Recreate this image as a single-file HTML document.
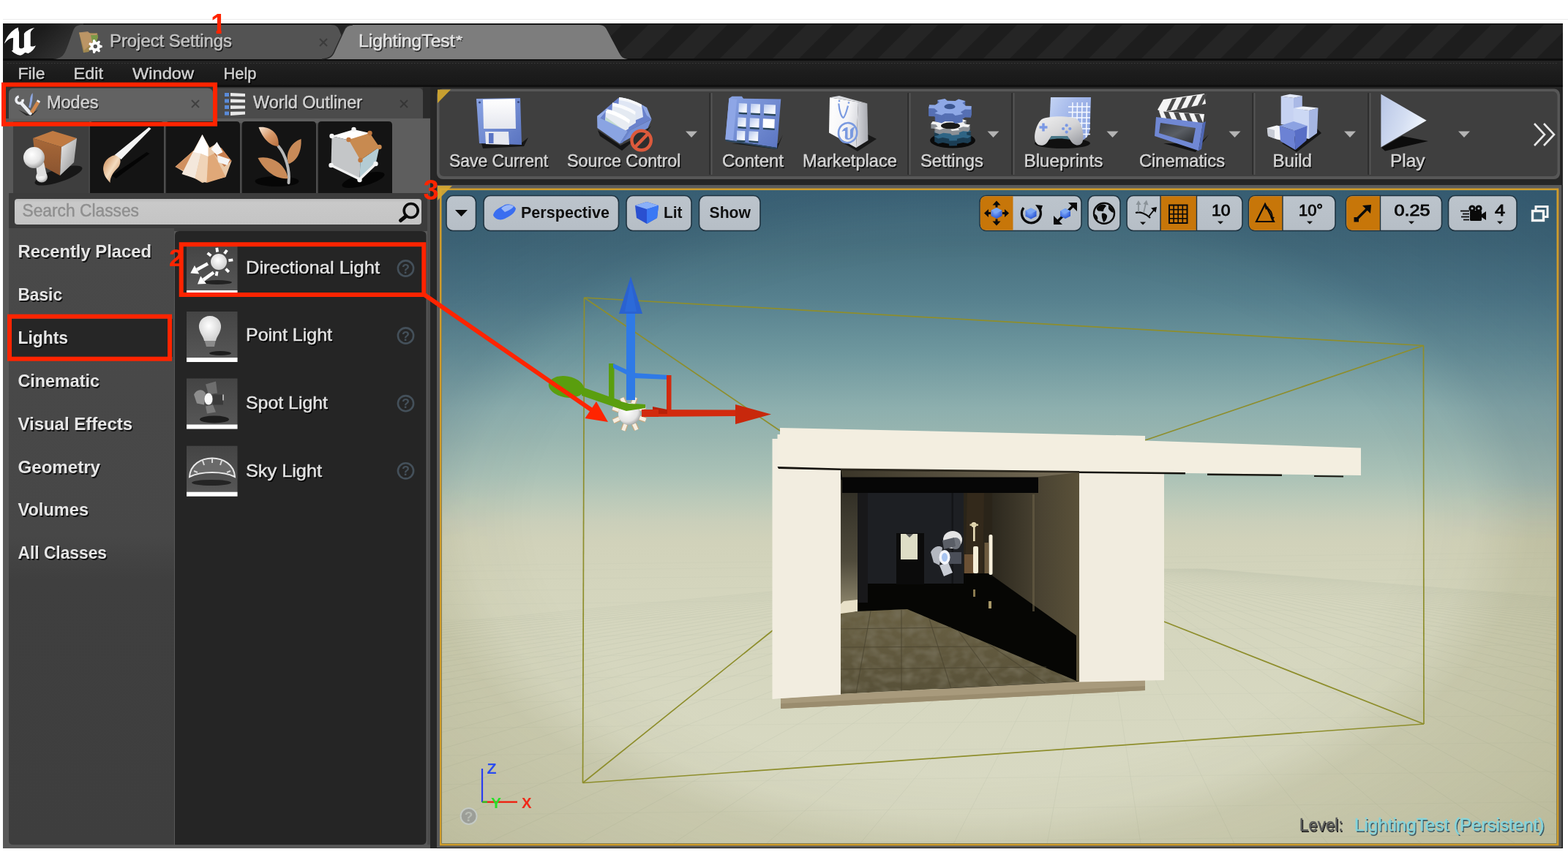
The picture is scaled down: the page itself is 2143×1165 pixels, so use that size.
<!DOCTYPE html>
<html lang="en"><head><meta charset="utf-8"><title>Unreal Editor - LightingTest</title>
<style>
html,body{margin:0;padding:0;background:#fff;width:2143px;height:1165px;overflow:hidden}
svg{display:block;will-change:transform;font-family:"Liberation Sans",sans-serif}
text{white-space:pre}
</style></head><body>
<svg width="2143" height="1165" viewBox="0 0 2143 1165">
<defs>
<pattern id="stripes" width="72" height="50" patternUnits="userSpaceOnUse" patternTransform="translate(10,32)">
  <rect width="72" height="50" fill="#252525"/>
  <polygon points="0,50 36,50 72,14 72,0 50,0" fill="#1d1d1d"/>
  <polygon points="0,14 0,0 14,0" fill="#1d1d1d"/>
</pattern>
<linearGradient id="tlg" x1="0" y1="0" x2="1" y2="0.5"><stop offset="0" stop-color="#151515"/><stop offset="0.45" stop-color="#1c1c1c"/><stop offset="1" stop-color="#343434"/></linearGradient>
<linearGradient id="menug" x1="0" y1="0" x2="0" y2="1">
  <stop offset="0" stop-color="#232323"/><stop offset="0.5" stop-color="#1c1c1c"/><stop offset="1" stop-color="#181818"/>
</linearGradient>
<linearGradient id="catg" gradientUnits="userSpaceOnUse" x1="0" y1="312" x2="0" y2="1155"><stop offset="0" stop-color="#494949"/><stop offset="0.5" stop-color="#474747"/><stop offset="0.57" stop-color="#3f3f3f"/><stop offset="1" stop-color="#3e3e3e"/></linearGradient>
<linearGradient id="thumbg" x1="0" y1="0" x2="0" y2="1">
  <stop offset="0" stop-color="#444"/><stop offset="1" stop-color="#585858"/>
</linearGradient>
<linearGradient id="searchg" x1="0" y1="0" x2="0" y2="1">
  <stop offset="0" stop-color="#bdbdbd"/><stop offset="0.15" stop-color="#c9c9c9"/><stop offset="1" stop-color="#c4c4c4"/>
</linearGradient>

<linearGradient id="blueg" x1="0" y1="0" x2="1" y2="1"><stop offset="0" stop-color="#8aa4e4"/><stop offset="1" stop-color="#5a74c0"/></linearGradient>
<linearGradient id="blueg2" x1="0" y1="0" x2="0" y2="1"><stop offset="0" stop-color="#92aae8"/><stop offset="1" stop-color="#6078c4"/></linearGradient>
<linearGradient id="whiteg" x1="0" y1="0" x2="0" y2="1"><stop offset="0" stop-color="#ffffff"/><stop offset="1" stop-color="#e4e6ee"/></linearGradient>
<linearGradient id="whiteg2" x1="0" y1="0" x2="1" y2="0"><stop offset="0" stop-color="#ffffff"/><stop offset="1" stop-color="#b8bcc8"/></linearGradient>
<linearGradient id="cellg" x1="0" y1="0" x2="1" y2="1"><stop offset="0" stop-color="#b4c6ee"/><stop offset="0.6" stop-color="#e8eefa"/><stop offset="1" stop-color="#ffffff"/></linearGradient>
<linearGradient id="bagg" x1="0" y1="0" x2="1" y2="0.3"><stop offset="0" stop-color="#ffffff"/><stop offset="0.7" stop-color="#f4f4f6"/><stop offset="1" stop-color="#dcdde2"/></linearGradient>
<linearGradient id="bagsg" x1="0" y1="0" x2="1" y2="0"><stop offset="0" stop-color="#d8d9de"/><stop offset="1" stop-color="#a8aab0"/></linearGradient>
<linearGradient id="pageg" x1="0" y1="0" x2="1" y2="0.6"><stop offset="0" stop-color="#c4d4f4"/><stop offset="0.5" stop-color="#a4b8ea"/><stop offset="1" stop-color="#90a8e2"/></linearGradient>
<linearGradient id="padg" x1="0" y1="0" x2="0.9" y2="1"><stop offset="0" stop-color="#f2f2f2"/><stop offset="0.55" stop-color="#d4d4d6"/><stop offset="1" stop-color="#9a9ca2"/></linearGradient>
<linearGradient id="playg" x1="0" y1="0" x2="1" y2="0.4"><stop offset="0" stop-color="#b8c6e6"/><stop offset="0.6" stop-color="#d4def2"/><stop offset="1" stop-color="#eef4fc"/></linearGradient>
<linearGradient id="bldg" x1="0" y1="0" x2="1" y2="0"><stop offset="0" stop-color="#a8b8e0"/><stop offset="0.5" stop-color="#dce4f6"/><stop offset="1" stop-color="#b4c2e6"/></linearGradient>
<linearGradient id="clapg" x1="0" y1="0" x2="1" y2="1"><stop offset="0" stop-color="#3a3e44"/><stop offset="0.5" stop-color="#5a5e64"/><stop offset="1" stop-color="#2a2c30"/></linearGradient>

<linearGradient id="sky" gradientUnits="userSpaceOnUse" x1="0" y1="258" x2="0" y2="1156">
  <stop offset="0" stop-color="#40687b"/>
  <stop offset="0.0835" stop-color="#48707f"/>
  <stop offset="0.161" stop-color="#557f8d"/>
  <stop offset="0.25" stop-color="#6e979e"/>
  <stop offset="0.334" stop-color="#8dafae"/>
  <stop offset="0.381" stop-color="#99b6b0"/>
  <stop offset="0.433" stop-color="#a9c1b6"/>
  <stop offset="0.475" stop-color="#bccab9"/>
  <stop offset="0.507" stop-color="#cacfba"/>
  <stop offset="0.538" stop-color="#d1d2ba"/>
  <stop offset="0.611" stop-color="#d4d5bd"/>
  <stop offset="0.826" stop-color="#d7d8c1"/>
  <stop offset="1" stop-color="#d9dac4"/>
</linearGradient>
<radialGradient id="vigS" gradientUnits="userSpaceOnUse" cx="0" cy="0" r="1" gradientTransform="translate(1325,707) scale(1080,640)">
  <stop offset="0.55" stop-color="#052043" stop-opacity="0"/>
  <stop offset="0.636" stop-color="#052043" stop-opacity="0.03"/>
  <stop offset="0.707" stop-color="#052043" stop-opacity="0.12"/>
  <stop offset="0.9" stop-color="#052043" stop-opacity="0.18"/>
  <stop offset="1" stop-color="#052043" stop-opacity="0.22"/>
</radialGradient>
<radialGradient id="vigG" gradientUnits="userSpaceOnUse" cx="0" cy="0" r="1" gradientTransform="translate(1325,707) scale(1080,640)">
  <stop offset="0.55" stop-color="#524d0d" stop-opacity="0"/>
  <stop offset="0.636" stop-color="#524d0d" stop-opacity="0.03"/>
  <stop offset="0.707" stop-color="#524d0d" stop-opacity="0.12"/>
  <stop offset="0.9" stop-color="#524d0d" stop-opacity="0.18"/>
  <stop offset="1" stop-color="#524d0d" stop-opacity="0.22"/>
</radialGradient>
<linearGradient id="mskS" gradientUnits="userSpaceOnUse" x1="0" y1="660" x2="0" y2="740"><stop offset="0" stop-color="#fff"/><stop offset="1" stop-color="#000"/></linearGradient>
<linearGradient id="mskG" gradientUnits="userSpaceOnUse" x1="0" y1="660" x2="0" y2="740"><stop offset="0" stop-color="#000"/><stop offset="1" stop-color="#fff"/></linearGradient>
<mask id="maskS" maskUnits="userSpaceOnUse" x="604" y="261" width="1523" height="892"><rect x="604" y="261" width="1523" height="892" fill="url(#mskS)"/></mask>
<mask id="maskG" maskUnits="userSpaceOnUse" x="604" y="261" width="1523" height="892"><rect x="604" y="261" width="1523" height="892" fill="url(#mskG)"/></mask>
<filter id="mottle" x="0" y="0" width="1" height="1"><feTurbulence type="fractalNoise" baseFrequency="0.06 0.09" numOctaves="2" seed="7" result="n"/><feColorMatrix in="n" type="matrix" values="0 0 0 0 0.18  0 0 0 0 0.16  0 0 0 0 0.10  0 0 0 -1.6 1.0" result="d"/><feComposite in="d" in2="SourceGraphic" operator="in"/></filter>
<clipPath id="vpclip"><rect x="604" y="261" width="1523" height="892"/></clipPath>
<linearGradient id="floorg" x1="0" y1="0" x2="0" y2="1"><stop offset="0" stop-color="#6a6144"/><stop offset="1" stop-color="#575038"/></linearGradient>
<linearGradient id="rwallg" x1="0" y1="0" x2="1" y2="0"><stop offset="0" stop-color="#2c281e"/><stop offset="0.55" stop-color="#4a4332"/><stop offset="1" stop-color="#5a5139"/></linearGradient>
<linearGradient id="lwallg" x1="0" y1="0" x2="0" y2="1"><stop offset="0" stop-color="#2c2a22"/><stop offset="0.6" stop-color="#504b3c"/><stop offset="1" stop-color="#9a9276"/></linearGradient>
<linearGradient id="ceilg" x1="0" y1="0" x2="1" y2="0"><stop offset="0" stop-color="#3a3528"/><stop offset="1" stop-color="#7a705a"/></linearGradient>
<radialGradient id="bulb" cx="0.4" cy="0.35" r="0.7"><stop offset="0" stop-color="#fff"/><stop offset="0.7" stop-color="#e4e4e4"/><stop offset="1" stop-color="#a0a0a0"/></radialGradient>
<linearGradient id="btn" x1="0" y1="0" x2="0" y2="1"><stop offset="0" stop-color="#bcc4cc"/><stop offset="1" stop-color="#b6bec6"/></linearGradient>
<radialGradient id="cubeb" cx="0.4" cy="0.35" r="0.7"><stop offset="0" stop-color="#8ab4ff"/><stop offset="1" stop-color="#2450d0"/></radialGradient>
</defs>
<rect x="4" y="26" width="2139" height="1" fill="#ececec" />
<rect x="4" y="32" width="2132" height="1128" fill="#262626" />
<rect x="4" y="32" width="2132" height="50" fill="url(#stripes)" />
<rect x="4" y="32" width="2132" height="2" fill="#161616" />
<rect x="4" y="32" width="110" height="50" fill="url(#tlg)" />
<rect x="4" y="80" width="2132" height="3" fill="#0e0e0e" />
<path d="M72,81 C86,80 88,74 92,64 L100,42 C102,36 106,34 112,34 L452,34 C460,34 462,37 464,42 L468,52 L452,81 Z" fill="#535353" />
<path d="M440,81 C452,80 455,76 458,68 L470,42 C472,36 476,34 482,34 L818,34 C826,34 828,38 830,42 L846,72 C849,78 852,80 858,81 Z" fill="#7d7d7d" />
<path d="M440,81 C452,80 455,76 458,68 L470,42 C472,36 476,34 482,34" fill="none" stroke="#2a2a2a" stroke-width="1.5" />
<path d="M6,59.7 C8,52 14,44 21,39.3 L25,37.6 C24.5,40 25.5,42 26,44 L26,64 C26,67 31,67 32.9,64.5 L32.9,46 C36,42 42,39 47.3,38.1 C44,40.5 42,42.5 41.7,45 L41.7,63 C44,64 47,63.5 49.1,62 C47,67 43,71 38.5,73.1 L34.3,71.7 C32,74 30,75.2 27.8,75.7 C23,75 19,72.5 15.8,69.4 L17.6,68.5 L18.1,51.8 C14,52 10,54.5 6,59.7 Z" fill="#ffffff" />
<path d="M108,44.5 L133,45.5 L134,52 L121,71 L114,72 Z" fill="#a08850" />
<path d="M108,44.5 L120,43 L124,46.5 L133,45.5 L126,58 L115,69 Z" fill="#c09868" opacity="0.85"/>
<path d="M124,48 L134,48 L132,57 L126,57 Z" fill="#7a9a48" />
<path d="M139.7,62.3 L139.7,64.7 L136.4,65.7 L135.8,66.9 L137.1,70.1 L135.2,71.6 L132.4,69.6 L131.1,69.9 L129.4,73.0 L127.0,72.4 L126.8,68.9 L125.8,68.1 L122.3,68.7 L121.3,66.5 L123.9,64.1 L123.9,62.9 L121.3,60.5 L122.3,58.3 L125.8,58.9 L126.8,58.1 L127.0,54.6 L129.4,54.0 L131.1,57.1 L132.4,57.4 L135.2,55.4 L137.1,56.9 L135.8,60.1 L136.4,61.3 Z" fill="#ffffff" />
<circle cx="130.3" cy="63.5" r="2.7" fill="#535353"/>
<text x="151.5" y="66" font-size="23.5" textLength="167" lengthAdjust="spacingAndGlyphs" fill="#1a1a1a" >Project Settings</text><text x="150" y="64" font-size="23.5" textLength="167" lengthAdjust="spacingAndGlyphs" fill="#c4c4c4"  stroke="#c4c4c4" stroke-width="0.45">Project Settings</text>
<line x1="437" y1="53" x2="447" y2="63" stroke="#3c3c3c" stroke-width="2" />
<line x1="437" y1="63" x2="447" y2="53" stroke="#3c3c3c" stroke-width="2" />
<text x="491.5" y="66" font-size="23.5" textLength="131.5" lengthAdjust="spacingAndGlyphs" fill="#2a2a2a" >LightingTest</text><text x="490" y="64" font-size="23.5" textLength="131.5" lengthAdjust="spacingAndGlyphs" fill="#e4e4e4"  stroke="#e4e4e4" stroke-width="0.45">LightingTest</text>
<text x="624.5" y="62.5" font-size="16" textLength="9" lengthAdjust="spacingAndGlyphs" fill="#2a2a2a" >*</text><text x="623" y="61" font-size="16" textLength="9" lengthAdjust="spacingAndGlyphs" fill="#e4e4e4"  stroke="#e4e4e4" stroke-width="0.45">*</text>
<rect x="4" y="83" width="2132" height="35" fill="url(#menug)" />
<line x1="10" y1="86.5" x2="2130" y2="86.5" stroke="#3a3a3a" stroke-width="1" stroke-dasharray="1.5,2.5"/>
<rect x="4" y="116" width="2132" height="3" fill="#101010" />
<text x="26.0" y="110" font-size="22.5" textLength="37" lengthAdjust="spacingAndGlyphs" fill="#000" >File</text><text x="24.5" y="108" font-size="22.5" textLength="37" lengthAdjust="spacingAndGlyphs" fill="#cfcfcf"  stroke="#cfcfcf" stroke-width="0.45">File</text>
<text x="102.0" y="110" font-size="22.5" textLength="40.5" lengthAdjust="spacingAndGlyphs" fill="#000" >Edit</text><text x="100.5" y="108" font-size="22.5" textLength="40.5" lengthAdjust="spacingAndGlyphs" fill="#cfcfcf"  stroke="#cfcfcf" stroke-width="0.45">Edit</text>
<text x="182.5" y="110" font-size="22.5" textLength="84" lengthAdjust="spacingAndGlyphs" fill="#000" >Window</text><text x="181" y="108" font-size="22.5" textLength="84" lengthAdjust="spacingAndGlyphs" fill="#cfcfcf"  stroke="#cfcfcf" stroke-width="0.45">Window</text>
<text x="307.0" y="110" font-size="22.5" textLength="45" lengthAdjust="spacingAndGlyphs" fill="#000" >Help</text><text x="305.5" y="108" font-size="22.5" textLength="45" lengthAdjust="spacingAndGlyphs" fill="#cfcfcf"  stroke="#cfcfcf" stroke-width="0.45">Help</text>
<rect x="4" y="119" width="584" height="1041" fill="#585858" />
<rect x="4" y="1155" width="584" height="5" fill="#585858" />
<rect x="4" y="119" width="584" height="47" fill="#333333" />
<rect x="578" y="119" width="10" height="42" fill="#2a2a2a" />
<path d="M291,166 L291,126 Q291,120.5 297,120.5 L572,120.5 Q578,120.5 578,126 L578,162 L291,162 Z" fill="#4b4b4b" />
<path d="M12,166 L12,128 Q12,120.5 20,120.5 L284,120.5 Q291,120.5 291,128 L291,166 Z" fill="#626262" />
<path d="M25,150 L40,157 L52,150 L44,158 L36,158 Z" fill="#2a2a2a" />
<line x1="29.5" y1="141.5" x2="41.5" y2="155" stroke="#eceef2" stroke-width="4.6" stroke-linecap="round"/>
<circle cx="26.6" cy="136.6" r="4.6" fill="none" stroke="#eceef2" stroke-width="3.6" stroke-dasharray="21 8" transform="rotate(-10 26.6 136.6)"/>
<path d="M44.5,127 C42,130 41,134 41,138 L39.2,147 L41.8,147.5 L44,138 C44.5,134 45,130 44.5,127 Z" fill="#8ea8e2" />
<path d="M50,138.5 L54,141 L45.5,155 L41,153 Z" fill="#d0884e" />
<path d="M51.2,136.2 L55,138.6 L54,141 L50,138.5 Z" fill="#f4f4f4" />
<text x="65.5" y="149.5" font-size="23.5" textLength="70.5" lengthAdjust="spacingAndGlyphs" fill="#222" >Modes</text><text x="64" y="147.5" font-size="23.5" textLength="70.5" lengthAdjust="spacingAndGlyphs" fill="#d2d2d2"  stroke="#d2d2d2" stroke-width="0.45">Modes</text>
<line x1="262" y1="137" x2="272" y2="147" stroke="#404040" stroke-width="2" />
<line x1="262" y1="147" x2="272" y2="137" stroke="#404040" stroke-width="2" />
<path d="M315,127.0 L335,128.0 L335,132.0 L315,131.5 Z" fill="#e8e8e8" />
<rect x="307" y="127.0" width="6" height="5" fill="#5a8ad8" />
<path d="M315,135.6 L335,136.2 L335,140.2 L315,140.3 Z" fill="#e8e8e8" />
<rect x="307" y="135.5" width="6" height="5" fill="#5a8ad8" />
<path d="M315,144.2 L335,144.4 L335,148.4 L315,149.1 Z" fill="#e8e8e8" />
<rect x="307" y="144.0" width="6" height="5" fill="#5a8ad8" />
<path d="M315,152.8 L335,152.6 L335,156.6 L315,157.9 Z" fill="#e8e8e8" />
<rect x="307" y="152.5" width="6" height="5" fill="#5a8ad8" />
<text x="347.5" y="149.5" font-size="23.5" textLength="149" lengthAdjust="spacingAndGlyphs" fill="#1a1a1a" >World Outliner</text><text x="346" y="147.5" font-size="23.5" textLength="149" lengthAdjust="spacingAndGlyphs" fill="#d2d2d2"  stroke="#d2d2d2" stroke-width="0.45">World Outliner</text>
<line x1="547" y1="137" x2="557" y2="147" stroke="#363636" stroke-width="2" />
<line x1="547" y1="147" x2="557" y2="137" stroke="#363636" stroke-width="2" />
<rect x="11" y="162" width="577" height="12" fill="#5e5e5e" />
<rect x="4" y="162" width="8" height="993" fill="#585858" />
<rect x="536" y="166" width="52" height="98" fill="#5e5e5e" />
<rect x="18" y="166" width="104" height="98" fill="#3e3e3e" />
<path d="M122.5,264 L122.5,171 Q122.5,166 127.5,166 L219,166 Q224,166 224,171 L224,264 Z" fill="#141414" />
<path d="M226.5,264 L226.5,171 Q226.5,166 231.5,166 L323,166 Q328,166 328,171 L328,264 Z" fill="#141414" />
<path d="M330.5,264 L330.5,171 Q330.5,166 335.5,166 L427,166 Q432,166 432,171 L432,264 Z" fill="#141414" />
<path d="M434.5,264 L434.5,171 Q434.5,166 439.5,166 L531,166 Q536,166 536,171 L536,264 Z" fill="#141414" />
<rect x="121.2" y="168" width="1.6" height="96" fill="#4a4a4a" />
<rect x="224.5" y="168" width="1.6" height="96" fill="#4a4a4a" />
<rect x="328.4" y="168" width="1.6" height="96" fill="#4a4a4a" />
<rect x="432.4" y="168" width="1.6" height="96" fill="#4a4a4a" />
<defs><radialGradient id="sphg" cx="0.4" cy="0.35" r="0.7"><stop offset="0" stop-color="#fff"/><stop offset="0.6" stop-color="#e4e4e4"/><stop offset="1" stop-color="#9a9a9a"/></radialGradient><linearGradient id="cubr" x1="0" y1="0" x2="1" y2="1"><stop offset="0" stop-color="#f0f0f0"/><stop offset="1" stop-color="#8a8a8a"/></linearGradient><linearGradient id="cubf" x1="0" y1="0" x2="0" y2="1"><stop offset="0" stop-color="#a86838"/><stop offset="1" stop-color="#8a5430"/></linearGradient></defs>
<ellipse cx="80" cy="240" rx="34" ry="9" fill="#111" opacity="0.85" transform="rotate(-18 80 240)"/>
<path d="M45,189 L72,179 L105,189 L84,201 Z" fill="#c07a42" />
<path d="M45,189 L84,201 L82,240 L60,228 L47,206 Z" fill="url(#cubf)" />
<path d="M84,201 L105,189 L101,222 L82,240 Z" fill="url(#cubr)" />
<ellipse cx="57" cy="242" rx="8" ry="7.5" fill="url(#sphg)"/>
<path d="M49,224 L51,242 L64,240 L60,222 Z" fill="#e0e0e0" />
<circle cx="46.5" cy="215.5" r="14.5" fill="url(#sphg)"/>
<defs><linearGradient id="brs" x1="0" y1="0" x2="1" y2="1"><stop offset="0" stop-color="#c8824a"/><stop offset="0.5" stop-color="#f4dcc0"/><stop offset="1" stop-color="#b87038"/></linearGradient></defs>
<path d="M152.5,240 L200.5,208 L204.5,210 L158.5,244 Z" fill="#050505" />
<path d="M203.5,174 L206.5,176 L165.5,218 L156.5,212 Z" fill="#f4f4f4" />
<path d="M157.5,212 C146.5,214 139.5,224 141.5,234 C142.5,242 147.5,246 150.5,250 C150.5,242 154.5,236 160.5,230 C164.5,226 165.5,220 163.5,216 Z" fill="url(#brs)" />
<path d="M239.5,228 L264.5,206 L276.5,184 L286.5,202 L296.5,196 L316.5,220 L308.5,242 L276.5,250 L266.5,244 Z" fill="#e8c8a8" />
<path d="M239.5,228 L264.5,206 L256.5,236 Z" fill="#d09060" />
<path d="M264.5,206 L274.5,210 L266.5,244 L248.5,238 Z" fill="#f4e8dc" />
<path d="M274.5,210 L284.5,214 L282.5,250 L266.5,244 Z" fill="#f0d4b8" />
<path d="M284.5,214 L292.5,210 L308.5,242 L282.5,250 Z" fill="#e0a878" />
<path d="M292.5,210 L302.5,202 L316.5,220 L306.5,228 Z" fill="#c88050" />
<path d="M264.5,208 L276.5,184 L284.5,200 L284.5,214 L274.5,210 Z" fill="#ffffff" />
<path d="M288.5,204 L296.5,194 L304.5,208 L296.5,212 Z" fill="#f8f8f8" />
<path d="M296.5,212 L314.5,218 L310.5,226 L298.5,222 Z" fill="#f4f4f4" />
<defs><linearGradient id="lfg" x1="0" y1="0" x2="1" y2="1"><stop offset="0" stop-color="#f8e8d8"/><stop offset="0.5" stop-color="#d89868"/><stop offset="1" stop-color="#b87040"/></linearGradient></defs>
<ellipse cx="378.5" cy="248" rx="30" ry="7" fill="#060606"/>
<path d="M380.5,200 C390.5,212 396.5,232 394.5,250" fill="none" stroke="#b8b8b8" stroke-width="4" stroke-linecap="round"/>
<path d="M380.5,200 C368.5,200 358.5,188 353.5,174 C368.5,172 382.5,182 380.5,200 Z" fill="url(#lfg)" />
<path d="M394.5,224 C388.5,210 398.5,194 411.5,190 C412.5,206 406.5,220 394.5,224 Z" fill="#c88a58" />
<path d="M393.5,244 C376.5,246 360.5,232 352.5,216 C370.5,212 390.5,224 393.5,244 Z" fill="#c88a58" />
<ellipse cx="496.5" cy="246" rx="30" ry="8" fill="#050505" transform="rotate(-15 496.5 246)"/>
<path d="M453.5,186 L483.5,177 L505.5,182 L482.5,193 Z" fill="#ffffff" />
<path d="M453.5,186 L482.5,193 L492.5,219 L491.5,245 L452.5,226 Z" fill="#c4c6c8" />
<path d="M492.5,219 L518.5,201 L513.5,224 L491.5,245 Z" fill="#b4ccd4" />
<path d="M476.5,191 L505.5,182 L518.5,201 L492.5,219 Z" fill="#c88a50" />
<circle cx="476.5" cy="191" r="3.2" fill="#c07840"/>
<circle cx="505.5" cy="182" r="3.2" fill="#c07840"/>
<circle cx="518.5" cy="201" r="3.2" fill="#c88a50"/>
<circle cx="492.5" cy="219" r="3.2" fill="#c07840"/>
<path d="M452.5,226 L491.5,245 L513.5,224" fill="none" stroke="#f0f0f0" stroke-width="3.5" stroke-linejoin="round"/>
<circle cx="453.5" cy="186" r="3.2" fill="#f4f4f4"/>
<circle cx="483.5" cy="177" r="3.2" fill="#f4f4f4"/>
<circle cx="452.5" cy="226" r="3.2" fill="#f4f4f4"/>
<circle cx="491.5" cy="246" r="3.2" fill="#f4f4f4"/>
<circle cx="513.5" cy="224" r="3.2" fill="#f4f4f4"/>
<rect x="12" y="264" width="572" height="52" fill="#3c3c3c" />
<rect x="584" y="264" width="4" height="891" fill="#4c4c4c" />
<rect x="20" y="272" width="556" height="35" rx="4" fill="url(#searchg)" />
<text x="30.5" y="296" font-size="23.5" textLength="159.5" lengthAdjust="spacingAndGlyphs" fill="#8f8f8f"  stroke="#8f8f8f" stroke-width="0.45">Search Classes</text>
<circle cx="561.7" cy="288" r="9.5" fill="none" stroke="#0a0a0a" stroke-width="3.6"/>
<line x1="555" y1="295.5" x2="547.5" y2="301.5" stroke="#0a0a0a" stroke-width="5" stroke-linecap="round"/>
<rect x="12" y="312" width="226" height="843" fill="url(#catg)" />
<path d="M12,1155 L12,1149 Q12,1155 18,1155 Z" fill="#585858" />
<path d="M239,1155 L239,322 Q239,316 245,316 L576,316 Q582.5,316 582.5,322 L582.5,1149 Q582.5,1155 576,1155 Z" fill="#252525" />
<rect x="14" y="436" width="222" height="52" fill="#262626" />
<text x="26.0" y="354.0" font-size="23.5" font-weight="bold" textLength="182.5" lengthAdjust="spacingAndGlyphs" fill="#111" >Recently Placed</text><text x="24.5" y="352.0" font-size="23.5" font-weight="bold" textLength="182.5" lengthAdjust="spacingAndGlyphs" fill="#e6e6e6" >Recently Placed</text>
<text x="26.0" y="412.9" font-size="23.5" font-weight="bold" textLength="60.5" lengthAdjust="spacingAndGlyphs" fill="#111" >Basic</text><text x="24.5" y="410.9" font-size="23.5" font-weight="bold" textLength="60.5" lengthAdjust="spacingAndGlyphs" fill="#e6e6e6" >Basic</text>
<text x="26.0" y="471.8" font-size="23.5" font-weight="bold" textLength="68.5" lengthAdjust="spacingAndGlyphs" fill="#111" >Lights</text><text x="24.5" y="469.8" font-size="23.5" font-weight="bold" textLength="68.5" lengthAdjust="spacingAndGlyphs" fill="#e6e6e6" >Lights</text>
<text x="26.0" y="530.7" font-size="23.5" font-weight="bold" textLength="111.5" lengthAdjust="spacingAndGlyphs" fill="#111" >Cinematic</text><text x="24.5" y="528.7" font-size="23.5" font-weight="bold" textLength="111.5" lengthAdjust="spacingAndGlyphs" fill="#e6e6e6" >Cinematic</text>
<text x="26.0" y="589.6" font-size="23.5" font-weight="bold" textLength="156.5" lengthAdjust="spacingAndGlyphs" fill="#111" >Visual Effects</text><text x="24.5" y="587.6" font-size="23.5" font-weight="bold" textLength="156.5" lengthAdjust="spacingAndGlyphs" fill="#e6e6e6" >Visual Effects</text>
<text x="26.0" y="648.5" font-size="23.5" font-weight="bold" textLength="112.5" lengthAdjust="spacingAndGlyphs" fill="#111" >Geometry</text><text x="24.5" y="646.5" font-size="23.5" font-weight="bold" textLength="112.5" lengthAdjust="spacingAndGlyphs" fill="#e6e6e6" >Geometry</text>
<text x="26.0" y="707.4" font-size="23.5" font-weight="bold" textLength="96.5" lengthAdjust="spacingAndGlyphs" fill="#111" >Volumes</text><text x="24.5" y="705.4" font-size="23.5" font-weight="bold" textLength="96.5" lengthAdjust="spacingAndGlyphs" fill="#e6e6e6" >Volumes</text>
<text x="26.0" y="766.3" font-size="23.5" font-weight="bold" textLength="121.5" lengthAdjust="spacingAndGlyphs" fill="#111" >All Classes</text><text x="24.5" y="764.3" font-size="23.5" font-weight="bold" textLength="121.5" lengthAdjust="spacingAndGlyphs" fill="#e6e6e6" >All Classes</text>
<rect x="255" y="334" width="69.5" height="69" fill="url(#thumbg)" />
<rect x="255" y="397" width="69.5" height="6" fill="#ffffff" />
<text x="337.5" y="376" font-size="24" textLength="183" lengthAdjust="spacingAndGlyphs" fill="#000" >Directional Light</text><text x="336" y="374" font-size="24" textLength="183" lengthAdjust="spacingAndGlyphs" fill="#e2e2e2"  stroke="#e2e2e2" stroke-width="0.45">Directional Light</text>
<circle cx="554.5" cy="367" r="10.6" fill="none" stroke="#44505a" stroke-width="2.6"/>
<text x="554.5" y="373.5" font-size="18" font-weight="bold" text-anchor="middle" fill="#44505a" >?</text>
<rect x="255" y="426" width="69.5" height="69" fill="url(#thumbg)" />
<rect x="255" y="489" width="69.5" height="6" fill="#ffffff" />
<text x="337.5" y="468" font-size="24" textLength="118" lengthAdjust="spacingAndGlyphs" fill="#000" >Point Light</text><text x="336" y="466" font-size="24" textLength="118" lengthAdjust="spacingAndGlyphs" fill="#e2e2e2"  stroke="#e2e2e2" stroke-width="0.45">Point Light</text>
<circle cx="554.5" cy="459" r="10.6" fill="none" stroke="#44505a" stroke-width="2.6"/>
<text x="554.5" y="465.5" font-size="18" font-weight="bold" text-anchor="middle" fill="#44505a" >?</text>
<rect x="255" y="517.5" width="69.5" height="69" fill="url(#thumbg)" />
<rect x="255" y="580.5" width="69.5" height="6" fill="#ffffff" />
<text x="337.5" y="560.5" font-size="24" textLength="112" lengthAdjust="spacingAndGlyphs" fill="#000" >Spot Light</text><text x="336" y="558.5" font-size="24" textLength="112" lengthAdjust="spacingAndGlyphs" fill="#e2e2e2"  stroke="#e2e2e2" stroke-width="0.45">Spot Light</text>
<circle cx="554.5" cy="551.7" r="10.6" fill="none" stroke="#44505a" stroke-width="2.6"/>
<text x="554.5" y="558.2" font-size="18" font-weight="bold" text-anchor="middle" fill="#44505a" >?</text>
<rect x="255" y="609.7" width="69.5" height="69" fill="url(#thumbg)" />
<rect x="255" y="672.7" width="69.5" height="6" fill="#ffffff" />
<text x="337.5" y="653.7" font-size="24" textLength="104" lengthAdjust="spacingAndGlyphs" fill="#000" >Sky Light</text><text x="336" y="651.7" font-size="24" textLength="104" lengthAdjust="spacingAndGlyphs" fill="#e2e2e2"  stroke="#e2e2e2" stroke-width="0.45">Sky Light</text>
<circle cx="554.5" cy="643.8" r="10.6" fill="none" stroke="#44505a" stroke-width="2.6"/>
<text x="554.5" y="650.3" font-size="18" font-weight="bold" text-anchor="middle" fill="#44505a" >?</text>
<defs><radialGradient id="sung" cx="0.45" cy="0.4" r="0.6"><stop offset="0" stop-color="#fff"/><stop offset="1" stop-color="#d0d0d0"/></radialGradient></defs>
<line x1="296.65574960149644" y1="371.29490466566483" x2="295.61386053549484" y2="377.20375118373806" stroke="#fff" stroke-width="3.8" />
<line x1="308.5459415460184" y1="367.5459415460184" x2="312.7885822331377" y2="371.7885822331377" stroke="#fff" stroke-width="3.8" />
<line x1="312.3686189280112" y1="356.1211631370391" x2="318.31022734046064" y2="355.28612453127874" stroke="#fff" stroke-width="3.8" />
<line x1="306.7432818907391" y1="346.9414474020986" x2="310.1847405088454" y2="342.02653513636466" stroke="#fff" stroke-width="3.8" />
<line x1="297.1211631370391" y1="344.6313810719888" x2="296.28612453127874" y2="338.68977265953936" stroke="#fff" stroke-width="3.8" />
<line x1="288.36185482630924" y1="349.6885700831036" x2="283.63379030466893" y2="345.99460123114966" stroke="#fff" stroke-width="3.8" />
<circle cx="299" cy="358" r="11" fill="url(#sung)"/>
<ellipse cx="297" cy="386" rx="20" ry="3" fill="#222"/>
<line x1="284" y1="360.5" x2="269.06762091785123" y2="368.6907564585626" stroke="#fff" stroke-width="4.6" />
<path d="M260.3,373.5 L265.94161261591694,362.9918028619593 L272.1936292197855,374.3897100551659 Z" fill="#fff" />
<line x1="292" y1="372.5" x2="278.0698768745428" y2="382.6943173781755" stroke="#fff" stroke-width="4.6" />
<path d="M270,388.6 L274.23118317035687,377.44889740972275 L281.9085705787287,387.9397373466283 Z" fill="#fff" />
<ellipse cx="301" cy="483" rx="15" ry="3" fill="#1e1e1e"/>
<path d="M279,464 L295,464 L293,474 L282,474 Z" fill="#8a8a8a" />
<path d="M287,432 C297,432 303,440 302,448 C301,456 296,460 295,466 L279,466 C278,460 273,456 272,448 C271,440 277,432 287,432 Z" fill="url(#sung)" />
<ellipse cx="293" cy="573.5" rx="20" ry="5" fill="#1e1e1e"/>
<path d="M281,525.5 L295,521.5 L297,537.5 L285,539.5 Z" fill="#6e6e6e" />
<path d="M265,539.5 C269,531.5 277,531.5 281,537.5 L279,553.5 L269,551.5 Z" fill="#8e8e8e" />
<path d="M291,539.5 L305,539.5 L305,553.5 L291,553.5 Z" fill="#3a3a3a" />
<line x1="305" y1="539.5" x2="305" y2="547.5" stroke="#d0d0d0" stroke-width="1.5" />
<path d="M281,555.5 L291,553.5 L295,563.5 L283,565.5 Z" fill="#7a7a7a" />
<ellipse cx="285" cy="545.5" rx="5.5" ry="8" fill="#fafafa"/>
<ellipse cx="289" cy="660" rx="27" ry="4" fill="#242424"/>
<path d="M259,652 C261,618 319,618 321,652 C305,644 275,644 259,652 Z" fill="#6a6a6a" stroke="#e8e8e8" stroke-width="2" />
<line x1="277" y1="630" x2="279" y2="636" stroke="#d8d8d8" stroke-width="2" />
<line x1="290" y1="627" x2="290" y2="633" stroke="#d8d8d8" stroke-width="2" />
<line x1="303" y1="630" x2="301" y2="636" stroke="#d8d8d8" stroke-width="2" />
<line x1="265" y1="644" x2="270" y2="646" stroke="#d8d8d8" stroke-width="2" />
<line x1="315" y1="644" x2="310" y2="646" stroke="#d8d8d8" stroke-width="2" />
<rect x="597" y="121.5" width="1535" height="123.5" rx="8" fill="#575757" />
<rect x="600.5" y="125" width="1528" height="116" rx="6" fill="#3f3f3f" />
<path d="M598,122.5 L616,122.5 L598,141 Z" fill="#c8a030" />
<path d="M658,196 L712,196 L722,188 L716,200 L660,203 Z" fill="#161616" />
<path d="M651,135 L711,134 L713,198 L655,196 Z" fill="url(#blueg)" />
<path d="M660,136 L704,135 L705,176 L661,176 Z" fill="url(#whiteg)" />
<path d="M663,180 L695,180 L696,198 L664,197 Z" fill="#e6e8f0" />
<rect x="668" y="182" width="6.5" height="14" fill="#5a74c4" />
<circle cx="655.5" cy="140" r="1.6" fill="#3a4a80"/><circle cx="708.5" cy="139.5" r="1.6" fill="#3a4a80"/>
<text x="615.5" y="230" font-size="23.5" textLength="135" lengthAdjust="spacingAndGlyphs" fill="#0a0a0a" >Save Current</text><text x="614" y="228" font-size="23.5" textLength="135" lengthAdjust="spacingAndGlyphs" fill="#d4d4d4"  stroke="#d4d4d4" stroke-width="0.45">Save Current</text>
<path d="M817,178 L848,199 L866,190 L884,180 L890,172 L850,206 L820,186 Z" fill="#151515" />
<path d="M816,159 L845,134 L877,143 L890.5,163 L858,180 Z" fill="#6a82cc" />
<path d="M846,133 C856,134 868,138 877,143 L879,160 L860,168 L845,150 Z" fill="#dfe6f4" />
<path d="M846,133 C856,134 868,138 877,143 L876,147 C868,142 856,138 846,137 Z" fill="#f6f8fc" />
<path d="M837,140.5 C848,142 860,147 868.6,152.7 L869,168 L856,176 L836,158 Z" fill="#e4eaf2" />
<path d="M837,140.5 C848,142 860,147 868.6,152.7 L868,157 C860,152 848,147 837,145 Z" fill="#fafbfd" />
<path d="M828,149 C840,151 852,157 861,164 L859,176 L850,182 L827,166 Z" fill="#e8ecf2" />
<path d="M828,149 C840,151 852,157 861,164 L860,169 C852,163 840,157 828,154 Z" fill="#ffffff" />
<path d="M828,160 L850,176 L850,179 L827,165 Z" fill="#c4dcd0" />
<path d="M816,159 L832,147 L829,151 L820,162 Z" fill="#96aee8" />
<path d="M877,143 L884,147 L890.5,163 L884,158 Z" fill="#90a8e4" />
<path d="M816,159 L858,179.7 L847,196.5 L816.4,175 Z" fill="#8aa4e2" />
<path d="M858,179.7 L890.6,163 L885.5,175 L847,196.5 Z" fill="#7690d6" />
<path d="M858,179.7 L862,178 L851,195 L847,196.5 Z" fill="#6a84cc" />
<circle cx="876.6" cy="192" r="13.2" fill="#2c2e2e" stroke="#dc5a3c" stroke-width="4.4"/>
<line x1="867.5" y1="201.5" x2="886" y2="182.5" stroke="#dc5a3c" stroke-width="4.6" />
<text x="776.5" y="230" font-size="23.5" textLength="155.5" lengthAdjust="spacingAndGlyphs" fill="#0a0a0a" >Source Control</text><text x="775" y="228" font-size="23.5" textLength="155.5" lengthAdjust="spacingAndGlyphs" fill="#d4d4d4"  stroke="#d4d4d4" stroke-width="0.45">Source Control</text>
<path d="M937,179.5 L953,179.5 L945.0,188.0 Z" fill="#b4b4b4" />
<rect x="969" y="127" width="2.5" height="112" rx="1" fill="#2e2e2e" />
<rect x="971.5" y="127" width="2" height="112" rx="1" fill="#555555" />
<path d="M1000,196 L1062,204 L1070,184 L1064,196 Z" fill="#161616" />
<path d="M996.4,134.4 L1000.5,131.8 L1013.9,131.8 L1016,134.8 L1067.3,135.4 L1062,202 L991.3,190.8 Z" fill="url(#blueg)" />
<path d="M996.4,134.4 L1007,136 L1002,192.5 L991.3,190.8 Z" fill="#8ea6e6" />
<path d="M991.3,190.8 L1062,202 L1062,204 L992,193 Z" fill="#2c4660" />
<path d="M1009.8,153.3 L1021.0,154.10000000000002 L1021.0,156.60000000000002 L1009.8,155.8 Z" fill="#2a4658" />
<path d="M1009.8,140.9 L1021.0,141.70000000000002 L1020.6,154.10000000000002 L1009.4,153.3 Z" fill="url(#cellg)" />
<path d="M1026.2,154.20000000000002 L1039.0,155.00000000000003 L1039.0,157.50000000000003 L1026.2,156.70000000000002 Z" fill="#2a4658" />
<path d="M1026.2,141.8 L1039.0,142.60000000000002 L1038.6,155.00000000000003 L1025.8,154.20000000000002 Z" fill="url(#cellg)" />
<path d="M1044.2,155.1 L1060.0,155.9 L1060.0,158.4 L1044.2,157.6 Z" fill="#2a4658" />
<path d="M1044.2,142.7 L1060.0,143.5 L1059.6,155.9 L1043.8,155.1 Z" fill="url(#cellg)" />
<path d="M1008.5,172.8 L1019.7,173.60000000000002 L1019.7,176.10000000000002 L1008.5,175.3 Z" fill="#2a4658" />
<path d="M1008.5,160.4 L1019.7,161.20000000000002 L1019.3000000000001,173.60000000000002 L1008.1,172.8 Z" fill="url(#cellg)" />
<path d="M1024.9,173.70000000000002 L1037.7,174.50000000000003 L1037.7,177.00000000000003 L1024.9,176.20000000000002 Z" fill="#2a4658" />
<path d="M1024.9,161.3 L1037.7,162.10000000000002 L1037.3,174.50000000000003 L1024.5,173.70000000000002 Z" fill="url(#cellg)" />
<path d="M1042.9,174.6 L1058.7,175.4 L1058.7,177.9 L1042.9,177.1 Z" fill="#2a4658" />
<path d="M1042.9,162.2 L1058.7,163.0 L1058.3,175.4 L1042.5,174.6 Z" fill="#ffffff" />
<path d="M1007.1999999999999,191.20000000000002 L1018.4,192.00000000000003 L1018.4,194.50000000000003 L1007.1999999999999,193.70000000000002 Z" fill="#2a4658" />
<path d="M1007.1999999999999,178.4 L1018.4,179.20000000000002 L1018.0,192.00000000000003 L1006.8,191.20000000000002 Z" fill="url(#cellg)" />
<path d="M1023.6,192.10000000000002 L1036.4,192.90000000000003 L1036.4,195.40000000000003 L1023.6,194.60000000000002 Z" fill="#2a4658" />
<path d="M1023.6,179.3 L1036.4,180.10000000000002 L1036.0,192.90000000000003 L1023.2,192.10000000000002 Z" fill="url(#cellg)" />
<text x="988.5" y="230" font-size="23.5" textLength="84" lengthAdjust="spacingAndGlyphs" fill="#0a0a0a" >Content</text><text x="987" y="228" font-size="23.5" textLength="84" lengthAdjust="spacingAndGlyphs" fill="#d4d4d4"  stroke="#d4d4d4" stroke-width="0.45">Content</text>
<path d="M1150,194 L1172,207 L1198,190 L1186,184 Z" fill="#181818" />
<path d="M1134,133.3 L1173,139.5 L1170,202 L1133,181.6 Z" fill="url(#bagg)" />
<path d="M1173,139.5 L1185.3,141.5 L1186.4,191.9 L1170,202 Z" fill="url(#bagsg)" />
<path d="M1134,133.3 L1147,131 L1185.3,141.5 L1173,139.5 Z" fill="#d8dade" />
<path d="M1146.3,141.5 C1147,152 1150,160 1152.5,161 C1155,160 1157,152 1159,144.6" fill="none" stroke="#7a9ae0" stroke-width="2.2" />
<circle cx="1147" cy="138" r="1.3" fill="#7a9ae0"/><circle cx="1160" cy="140.5" r="1.3" fill="#7a9ae0"/>
<ellipse cx="1158.6" cy="181.6" rx="12.6" ry="13.6" fill="none" stroke="#7a9ae0" stroke-width="2.6" transform="rotate(8 1158.6 181.6)"/>
<path d="M1150.5,180 C1152.5,175.5 1156,174 1158.5,174 L1158.5,188 C1159.5,190 1161,189 1162,188 L1162,177.5 C1164,175 1166.5,173.5 1168.5,173.5 C1166.5,176 1166,179 1166,186.5 C1164.5,189.5 1160.5,192 1156.5,190.5 C1154,189.5 1155,186 1155,184 L1155,179 C1153,179 1151.5,179.5 1150.5,180 Z" fill="#7a9ae0" />
<text x="1098.5" y="230" font-size="23.5" textLength="129" lengthAdjust="spacingAndGlyphs" fill="#0a0a0a" >Marketplace</text><text x="1097" y="228" font-size="23.5" textLength="129" lengthAdjust="spacingAndGlyphs" fill="#d4d4d4"  stroke="#d4d4d4" stroke-width="0.45">Marketplace</text>
<rect x="1240" y="127" width="2.5" height="112" rx="1" fill="#2e2e2e" />
<rect x="1242.5" y="127" width="2" height="112" rx="1" fill="#555555" />
<ellipse cx="1302" cy="192" rx="31" ry="10.5" fill="#0a0a0a"/>
<path d="M1327.8,192.8 L1322.7,196.1 L1316.3,194.9 L1307.9,196.7 L1308.0,199.3 L1297.3,199.4 L1297.1,196.8 L1288.4,195.1 L1282.2,196.5 L1276.6,193.2 L1282.8,191.9 L1282.5,188.4 L1276.2,187.2 L1281.3,183.9 L1287.7,185.1 L1296.1,183.3 L1296.0,180.7 L1306.7,180.6 L1306.9,183.2 L1315.6,184.9 L1321.8,183.5 L1327.4,186.8 L1321.2,188.1 L1321.5,191.6 Z" fill="#1c3e54" />
<path d="M1327.8,191.8 L1322.7,195.1 L1316.3,193.9 L1307.9,195.7 L1308.0,198.3 L1297.3,198.4 L1297.1,195.8 L1288.4,194.1 L1282.2,195.5 L1276.6,192.2 L1282.8,190.9 L1282.5,187.4 L1276.2,186.2 L1281.3,182.9 L1287.7,184.1 L1296.1,182.3 L1296.0,179.7 L1306.7,179.6 L1306.9,182.2 L1315.6,183.9 L1321.8,182.5 L1327.4,185.8 L1321.2,187.1 L1321.5,190.6 Z" fill="#1c3e54" />
<path d="M1327.8,190.8 L1322.7,194.1 L1316.3,192.9 L1307.9,194.7 L1308.0,197.3 L1297.3,197.4 L1297.1,194.8 L1288.4,193.1 L1282.2,194.5 L1276.6,191.2 L1282.8,189.9 L1282.5,186.4 L1276.2,185.2 L1281.3,181.9 L1287.7,183.1 L1296.1,181.3 L1296.0,178.7 L1306.7,178.6 L1306.9,181.2 L1315.6,182.9 L1321.8,181.5 L1327.4,184.8 L1321.2,186.1 L1321.5,189.6 Z" fill="#1c3e54" />
<path d="M1327.8,189.8 L1322.7,193.1 L1316.3,191.9 L1307.9,193.7 L1308.0,196.3 L1297.3,196.4 L1297.1,193.8 L1288.4,192.1 L1282.2,193.5 L1276.6,190.2 L1282.8,188.9 L1282.5,185.4 L1276.2,184.2 L1281.3,180.9 L1287.7,182.1 L1296.1,180.3 L1296.0,177.7 L1306.7,177.6 L1306.9,180.2 L1315.6,181.9 L1321.8,180.5 L1327.4,183.8 L1321.2,185.1 L1321.5,188.6 Z" fill="#1c3e54" />
<path d="M1327.8,188.8 L1322.7,192.1 L1316.3,190.9 L1307.9,192.7 L1308.0,195.3 L1297.3,195.4 L1297.1,192.8 L1288.4,191.1 L1282.2,192.5 L1276.6,189.2 L1282.8,187.9 L1282.5,184.4 L1276.2,183.2 L1281.3,179.9 L1287.7,181.1 L1296.1,179.3 L1296.0,176.7 L1306.7,176.6 L1306.9,179.2 L1315.6,180.9 L1321.8,179.5 L1327.4,182.8 L1321.2,184.1 L1321.5,187.6 Z" fill="#1c3e54" />
<path d="M1327.8,187.8 L1322.7,191.1 L1316.3,189.9 L1307.9,191.7 L1308.0,194.3 L1297.3,194.4 L1297.1,191.8 L1288.4,190.1 L1282.2,191.5 L1276.6,188.2 L1282.8,186.9 L1282.5,183.4 L1276.2,182.2 L1281.3,178.9 L1287.7,180.1 L1296.1,178.3 L1296.0,175.7 L1306.7,175.6 L1306.9,178.2 L1315.6,179.9 L1321.8,178.5 L1327.4,181.8 L1321.2,183.1 L1321.5,186.6 Z" fill="#1c3e54" />
<path d="M1327.8,186.8 L1322.7,190.1 L1316.3,188.9 L1307.9,190.7 L1308.0,193.3 L1297.3,193.4 L1297.1,190.8 L1288.4,189.1 L1282.2,190.5 L1276.6,187.2 L1282.8,185.9 L1282.5,182.4 L1276.2,181.2 L1281.3,177.9 L1287.7,179.1 L1296.1,177.3 L1296.0,174.7 L1306.7,174.6 L1306.9,177.2 L1315.6,178.9 L1321.8,177.5 L1327.4,180.8 L1321.2,182.1 L1321.5,185.6 Z" fill="#1c3e54" />
<path d="M1327.8,185.8 L1322.7,189.1 L1316.3,187.9 L1307.9,189.7 L1308.0,192.3 L1297.3,192.4 L1297.1,189.8 L1288.4,188.1 L1282.2,189.5 L1276.6,186.2 L1282.8,184.9 L1282.5,181.4 L1276.2,180.2 L1281.3,176.9 L1287.7,178.1 L1296.1,176.3 L1296.0,173.7 L1306.7,173.6 L1306.9,176.2 L1315.6,177.9 L1321.8,176.5 L1327.4,179.8 L1321.2,181.1 L1321.5,184.6 Z" fill="#2e6484" />
<path d="M1326.0,176.4 L1323.3,179.9 L1316.3,179.3 L1309.4,181.7 L1311.3,184.0 L1301.0,185.0 L1299.0,182.7 L1289.4,181.8 L1284.3,183.6 L1276.7,181.1 L1281.7,179.3 L1279.0,176.2 L1272.0,175.6 L1274.7,172.1 L1281.7,172.7 L1288.6,170.3 L1286.7,168.0 L1297.0,167.0 L1299.0,169.3 L1308.6,170.2 L1313.7,168.4 L1321.3,170.9 L1316.3,172.7 L1319.0,175.8 Z" fill="#8c9096" />
<path d="M1326.0,175.4 L1323.3,178.9 L1316.3,178.3 L1309.4,180.7 L1311.3,183.0 L1301.0,184.0 L1299.0,181.7 L1289.4,180.8 L1284.3,182.6 L1276.7,180.1 L1281.7,178.3 L1279.0,175.2 L1272.0,174.6 L1274.7,171.1 L1281.7,171.7 L1288.6,169.3 L1286.7,167.0 L1297.0,166.0 L1299.0,168.3 L1308.6,169.2 L1313.7,167.4 L1321.3,169.9 L1316.3,171.7 L1319.0,174.8 Z" fill="#8c9096" />
<path d="M1326.0,174.4 L1323.3,177.9 L1316.3,177.3 L1309.4,179.7 L1311.3,182.0 L1301.0,183.0 L1299.0,180.7 L1289.4,179.8 L1284.3,181.6 L1276.7,179.1 L1281.7,177.3 L1279.0,174.2 L1272.0,173.6 L1274.7,170.1 L1281.7,170.7 L1288.6,168.3 L1286.7,166.0 L1297.0,165.0 L1299.0,167.3 L1308.6,168.2 L1313.7,166.4 L1321.3,168.9 L1316.3,170.7 L1319.0,173.8 Z" fill="#8c9096" />
<path d="M1326.0,173.4 L1323.3,176.9 L1316.3,176.3 L1309.4,178.7 L1311.3,181.0 L1301.0,182.0 L1299.0,179.7 L1289.4,178.8 L1284.3,180.6 L1276.7,178.1 L1281.7,176.3 L1279.0,173.2 L1272.0,172.6 L1274.7,169.1 L1281.7,169.7 L1288.6,167.3 L1286.7,165.0 L1297.0,164.0 L1299.0,166.3 L1308.6,167.2 L1313.7,165.4 L1321.3,167.9 L1316.3,169.7 L1319.0,172.8 Z" fill="#8c9096" />
<path d="M1326.0,172.4 L1323.3,175.9 L1316.3,175.3 L1309.4,177.7 L1311.3,180.0 L1301.0,181.0 L1299.0,178.7 L1289.4,177.8 L1284.3,179.6 L1276.7,177.1 L1281.7,175.3 L1279.0,172.2 L1272.0,171.6 L1274.7,168.1 L1281.7,168.7 L1288.6,166.3 L1286.7,164.0 L1297.0,163.0 L1299.0,165.3 L1308.6,166.2 L1313.7,164.4 L1321.3,166.9 L1316.3,168.7 L1319.0,171.8 Z" fill="#8c9096" />
<path d="M1326.0,171.4 L1323.3,174.9 L1316.3,174.3 L1309.4,176.7 L1311.3,179.0 L1301.0,180.0 L1299.0,177.7 L1289.4,176.8 L1284.3,178.6 L1276.7,176.1 L1281.7,174.3 L1279.0,171.2 L1272.0,170.6 L1274.7,167.1 L1281.7,167.7 L1288.6,165.3 L1286.7,163.0 L1297.0,162.0 L1299.0,164.3 L1308.6,165.2 L1313.7,163.4 L1321.3,165.9 L1316.3,167.7 L1319.0,170.8 Z" fill="#8c9096" />
<path d="M1326.0,170.4 L1323.3,173.9 L1316.3,173.3 L1309.4,175.7 L1311.3,178.0 L1301.0,179.0 L1299.0,176.7 L1289.4,175.8 L1284.3,177.6 L1276.7,175.1 L1281.7,173.3 L1279.0,170.2 L1272.0,169.6 L1274.7,166.1 L1281.7,166.7 L1288.6,164.3 L1286.7,162.0 L1297.0,161.0 L1299.0,163.3 L1308.6,164.2 L1313.7,162.4 L1321.3,164.9 L1316.3,166.7 L1319.0,169.8 Z" fill="#f2f2f2" />
<ellipse cx="1299" cy="172" rx="13" ry="4.5" fill="#1a1a1a"/>
<path d="M1327.8,156.1 L1326.9,160.8 L1319.0,160.6 L1312.8,164.2 L1316.2,167.1 L1305.6,169.1 L1302.2,166.3 L1291.4,165.9 L1286.9,168.5 L1277.3,165.8 L1281.7,163.2 L1277.1,159.2 L1269.2,158.9 L1270.1,154.2 L1278.0,154.4 L1284.2,150.8 L1280.8,147.9 L1291.4,145.9 L1294.8,148.7 L1305.6,149.1 L1310.1,146.5 L1319.7,149.2 L1315.3,151.8 L1319.9,155.8 Z" fill="#5670b4" />
<path d="M1327.8,155.1 L1326.9,159.8 L1319.0,159.6 L1312.8,163.2 L1316.2,166.1 L1305.6,168.1 L1302.2,165.3 L1291.4,164.9 L1286.9,167.5 L1277.3,164.8 L1281.7,162.2 L1277.1,158.2 L1269.2,157.9 L1270.1,153.2 L1278.0,153.4 L1284.2,149.8 L1280.8,146.9 L1291.4,144.9 L1294.8,147.7 L1305.6,148.1 L1310.1,145.5 L1319.7,148.2 L1315.3,150.8 L1319.9,154.8 Z" fill="#5670b4" />
<path d="M1327.8,154.1 L1326.9,158.8 L1319.0,158.6 L1312.8,162.2 L1316.2,165.1 L1305.6,167.1 L1302.2,164.3 L1291.4,163.9 L1286.9,166.5 L1277.3,163.8 L1281.7,161.2 L1277.1,157.2 L1269.2,156.9 L1270.1,152.2 L1278.0,152.4 L1284.2,148.8 L1280.8,145.9 L1291.4,143.9 L1294.8,146.7 L1305.6,147.1 L1310.1,144.5 L1319.7,147.2 L1315.3,149.8 L1319.9,153.8 Z" fill="#5670b4" />
<path d="M1327.8,153.1 L1326.9,157.8 L1319.0,157.6 L1312.8,161.2 L1316.2,164.1 L1305.6,166.1 L1302.2,163.3 L1291.4,162.9 L1286.9,165.5 L1277.3,162.8 L1281.7,160.2 L1277.1,156.2 L1269.2,155.9 L1270.1,151.2 L1278.0,151.4 L1284.2,147.8 L1280.8,144.9 L1291.4,142.9 L1294.8,145.7 L1305.6,146.1 L1310.1,143.5 L1319.7,146.2 L1315.3,148.8 L1319.9,152.8 Z" fill="#5670b4" />
<path d="M1327.8,152.1 L1326.9,156.8 L1319.0,156.6 L1312.8,160.2 L1316.2,163.1 L1305.6,165.1 L1302.2,162.3 L1291.4,161.9 L1286.9,164.5 L1277.3,161.8 L1281.7,159.2 L1277.1,155.2 L1269.2,154.9 L1270.1,150.2 L1278.0,150.4 L1284.2,146.8 L1280.8,143.9 L1291.4,141.9 L1294.8,144.7 L1305.6,145.1 L1310.1,142.5 L1319.7,145.2 L1315.3,147.8 L1319.9,151.8 Z" fill="#5670b4" />
<path d="M1327.8,151.1 L1326.9,155.8 L1319.0,155.6 L1312.8,159.2 L1316.2,162.1 L1305.6,164.1 L1302.2,161.3 L1291.4,160.9 L1286.9,163.5 L1277.3,160.8 L1281.7,158.2 L1277.1,154.2 L1269.2,153.9 L1270.1,149.2 L1278.0,149.4 L1284.2,145.8 L1280.8,142.9 L1291.4,140.9 L1294.8,143.7 L1305.6,144.1 L1310.1,141.5 L1319.7,144.2 L1315.3,146.8 L1319.9,150.8 Z" fill="#5670b4" />
<path d="M1327.8,150.1 L1326.9,154.8 L1319.0,154.6 L1312.8,158.2 L1316.2,161.1 L1305.6,163.1 L1302.2,160.3 L1291.4,159.9 L1286.9,162.5 L1277.3,159.8 L1281.7,157.2 L1277.1,153.2 L1269.2,152.9 L1270.1,148.2 L1278.0,148.4 L1284.2,144.8 L1280.8,141.9 L1291.4,139.9 L1294.8,142.7 L1305.6,143.1 L1310.1,140.5 L1319.7,143.2 L1315.3,145.8 L1319.9,149.8 Z" fill="#5670b4" />
<path d="M1327.8,149.1 L1326.9,153.8 L1319.0,153.6 L1312.8,157.2 L1316.2,160.1 L1305.6,162.1 L1302.2,159.3 L1291.4,158.9 L1286.9,161.5 L1277.3,158.8 L1281.7,156.2 L1277.1,152.2 L1269.2,151.9 L1270.1,147.2 L1278.0,147.4 L1284.2,143.8 L1280.8,140.9 L1291.4,138.9 L1294.8,141.7 L1305.6,142.1 L1310.1,139.5 L1319.7,142.2 L1315.3,144.8 L1319.9,148.8 Z" fill="#5670b4" />
<path d="M1327.8,148.1 L1326.9,152.8 L1319.0,152.6 L1312.8,156.2 L1316.2,159.1 L1305.6,161.1 L1302.2,158.3 L1291.4,157.9 L1286.9,160.5 L1277.3,157.8 L1281.7,155.2 L1277.1,151.2 L1269.2,150.9 L1270.1,146.2 L1278.0,146.4 L1284.2,142.8 L1280.8,139.9 L1291.4,137.9 L1294.8,140.7 L1305.6,141.1 L1310.1,138.5 L1319.7,141.2 L1315.3,143.8 L1319.9,147.8 Z" fill="#5670b4" />
<path d="M1327.8,147.1 L1326.9,151.8 L1319.0,151.6 L1312.8,155.2 L1316.2,158.1 L1305.6,160.1 L1302.2,157.3 L1291.4,156.9 L1286.9,159.5 L1277.3,156.8 L1281.7,154.2 L1277.1,150.2 L1269.2,149.9 L1270.1,145.2 L1278.0,145.4 L1284.2,141.8 L1280.8,138.9 L1291.4,136.9 L1294.8,139.7 L1305.6,140.1 L1310.1,137.5 L1319.7,140.2 L1315.3,142.8 L1319.9,146.8 Z" fill="#5670b4" />
<path d="M1327.8,146.1 L1326.9,150.8 L1319.0,150.6 L1312.8,154.2 L1316.2,157.1 L1305.6,159.1 L1302.2,156.3 L1291.4,155.9 L1286.9,158.5 L1277.3,155.8 L1281.7,153.2 L1277.1,149.2 L1269.2,148.9 L1270.1,144.2 L1278.0,144.4 L1284.2,140.8 L1280.8,137.9 L1291.4,135.9 L1294.8,138.7 L1305.6,139.1 L1310.1,136.5 L1319.7,139.2 L1315.3,141.8 L1319.9,145.8 Z" fill="#5670b4" />
<path d="M1327.8,145.1 L1326.9,149.8 L1319.0,149.6 L1312.8,153.2 L1316.2,156.1 L1305.6,158.1 L1302.2,155.3 L1291.4,154.9 L1286.9,157.5 L1277.3,154.8 L1281.7,152.2 L1277.1,148.2 L1269.2,147.9 L1270.1,143.2 L1278.0,143.4 L1284.2,139.8 L1280.8,136.9 L1291.4,134.9 L1294.8,137.7 L1305.6,138.1 L1310.1,135.5 L1319.7,138.2 L1315.3,140.8 L1319.9,144.8 Z" fill="#8ea8e6" />
<ellipse cx="1298" cy="145.7" rx="7.5" ry="3.6" fill="#3c5690"/>
<text x="1259.5" y="230" font-size="23.5" textLength="86" lengthAdjust="spacingAndGlyphs" fill="#0a0a0a" >Settings</text><text x="1258" y="228" font-size="23.5" textLength="86" lengthAdjust="spacingAndGlyphs" fill="#d4d4d4"  stroke="#d4d4d4" stroke-width="0.45">Settings</text>
<path d="M1349.5,179.5 L1365.5,179.5 L1357.5,188.0 Z" fill="#b4b4b4" />
<rect x="1382" y="127" width="2.5" height="112" rx="1" fill="#2e2e2e" />
<rect x="1384.5" y="127" width="2" height="112" rx="1" fill="#555555" />
<ellipse cx="1452" cy="196" rx="38" ry="7" fill="#101010"/>
<path d="M1436,133 L1491,133 L1489.5,178 C1488,186 1484,190 1478.5,192 L1440,186 L1434.7,160 Z" fill="url(#pageg)" />
<line x1="1466.0" y1="140" x2="1465.0" y2="188" stroke="#f4f8ff" stroke-width="1.6" />
<line x1="1472.5" y1="140" x2="1471.5" y2="188" stroke="#f4f8ff" stroke-width="1.6" />
<line x1="1479.0" y1="140" x2="1478.0" y2="188" stroke="#f4f8ff" stroke-width="1.6" />
<line x1="1485.5" y1="140" x2="1484.5" y2="188" stroke="#f4f8ff" stroke-width="1.6" />
<line x1="1460" y1="146.0" x2="1490" y2="146.0" stroke="#f4f8ff" stroke-width="1.6" />
<line x1="1460" y1="153.5" x2="1490" y2="153.5" stroke="#f4f8ff" stroke-width="1.6" />
<line x1="1460" y1="161.0" x2="1490" y2="161.0" stroke="#f4f8ff" stroke-width="1.6" />
<line x1="1460" y1="168.5" x2="1490" y2="168.5" stroke="#f4f8ff" stroke-width="1.6" />
<line x1="1460" y1="176.0" x2="1490" y2="176.0" stroke="#f4f8ff" stroke-width="1.6" />
<line x1="1460" y1="183.5" x2="1490" y2="183.5" stroke="#f4f8ff" stroke-width="1.6" />
<path d="M1424,163 C1434,158 1462,158 1472,163 C1479,169 1483,188 1479,195 C1475,201 1467,199 1463,192 L1459,186 L1437,186 L1433,192 C1429,200 1420,201 1416,195 C1411,187 1417,168 1424,163 Z" fill="url(#padg)" />
<path d="M1437,186 L1459,186 L1462,191 C1452,189 1444,189 1434,191 Z" fill="#4a7888" />
<rect x="1420.5" y="172.3" width="11" height="3.4" fill="#7a98e4" />
<rect x="1424.3" y="168.5" width="3.4" height="11" fill="#7a98e4" />
<circle cx="1457.7" cy="171.4" r="2.1" fill="#7a98e4"/>
<circle cx="1462.3" cy="176" r="2.1" fill="#7a98e4"/>
<circle cx="1457.7" cy="180.6" r="2.1" fill="#7a98e4"/>
<circle cx="1453.1000000000001" cy="176" r="2.1" fill="#7a98e4"/>
<text x="1401.0" y="230" font-size="23.5" textLength="108" lengthAdjust="spacingAndGlyphs" fill="#0a0a0a" >Blueprints</text><text x="1399.5" y="228" font-size="23.5" textLength="108" lengthAdjust="spacingAndGlyphs" fill="#d4d4d4"  stroke="#d4d4d4" stroke-width="0.45">Blueprints</text>
<path d="M1512.5,179.5 L1528.5,179.5 L1520.5,188.0 Z" fill="#b4b4b4" />
<path d="M1590,196 L1634,208 L1652,184 L1640,196 Z" fill="#111" />
<path d="M1582,150 L1590,136 L1646,128 L1648,142 L1588,154 Z" fill="#f4f4f4" />
<path d="M1594,152.0 L1602,135.5 L1608,134.6 L1600,151.0 Z" fill="#4a4a4a" />
<path d="M1608,149.8 L1616,133.5 L1622,132.6 L1614,148.8 Z" fill="#4a4a4a" />
<path d="M1622,147.6 L1630,131.5 L1636,130.6 L1628,146.6 Z" fill="#4a4a4a" />
<path d="M1636,145.4 L1644,129.5 L1650,128.6 L1642,144.4 Z" fill="#4a4a4a" />
<path d="M1584,152 L1646,156 L1644,170 L1588,164 Z" fill="#f4f4f4" />
<path d="M1590,152.5 L1597,153 L1603,167 L1596,166 Z" fill="#4a4a4a" />
<path d="M1604,153.5 L1611,154 L1617,168 L1610,167 Z" fill="#4a4a4a" />
<path d="M1618,154.5 L1625,155 L1631,169 L1624,168 Z" fill="#4a4a4a" />
<path d="M1632,155.5 L1639,156 L1645,170 L1638,169 Z" fill="#4a4a4a" />
<path d="M1580,160 L1644,168 L1638,206 L1578,186 Z" fill="#7088d4" />
<path d="M1586,168 L1634,175 L1630,196 L1584,182 Z" fill="url(#clapg)" />
<path d="M1644,168 L1648,166 L1642,204 L1638,206 Z" fill="#5068b4" />
<text x="1558.5" y="230" font-size="23.5" textLength="117" lengthAdjust="spacingAndGlyphs" fill="#0a0a0a" >Cinematics</text><text x="1557" y="228" font-size="23.5" textLength="117" lengthAdjust="spacingAndGlyphs" fill="#d4d4d4"  stroke="#d4d4d4" stroke-width="0.45">Cinematics</text>
<path d="M1679.5,179.5 L1695.5,179.5 L1687.5,188.0 Z" fill="#b4b4b4" />
<rect x="1711" y="127" width="2.5" height="112" rx="1" fill="#2e2e2e" />
<rect x="1713.5" y="127" width="2" height="112" rx="1" fill="#555555" />
<path d="M1752,196 L1772,208 L1806,182 L1800,176 Z" fill="#141414" />
<path d="M1750.7,131.5 L1768,134 L1768,172 L1750.7,170 Z" fill="#c6d2f2" />
<path d="M1768,134 L1779.8,131 L1779.8,168 L1768,172 Z" fill="#aab9e6" />
<path d="M1750.7,131.5 L1763,128.8 L1779.8,131 L1768,134 Z" fill="#e4eafa" />
<path d="M1767.7,148 L1789,151 L1789,190 L1767.7,186 Z" fill="#ccd8f4" />
<path d="M1789,151 L1801.5,147.5 L1800,182 L1789,190 Z" fill="#a6b6e2" />
<path d="M1767.7,148 L1781,145.5 L1801.5,147.5 L1789,151 Z" fill="#eef2fc" />
<path d="M1731.8,175 L1745,171.4 L1752,173 L1752,192 L1745,190.4 L1733,186 Z" fill="#f4f5f8" />
<path d="M1731.8,175 L1742,178 L1742,189.5 L1733,186 Z" fill="#c8ccd6" />
<path d="M1748.7,172 L1768,166 L1786.6,172 L1769,178.5 Z" fill="#8ca2e2" />
<path d="M1748.7,172 L1769,178.5 L1770.4,205 L1750,193 Z" fill="#6c82d4" />
<path d="M1769,178.5 L1786.6,172 L1785.5,192 L1770.4,205 Z" fill="#586ec6" />
<text x="1741.0" y="230" font-size="23.5" textLength="53.5" lengthAdjust="spacingAndGlyphs" fill="#0a0a0a" >Build</text><text x="1739.5" y="228" font-size="23.5" textLength="53.5" lengthAdjust="spacingAndGlyphs" fill="#d4d4d4"  stroke="#d4d4d4" stroke-width="0.45">Build</text>
<path d="M1837,179.5 L1853,179.5 L1845.0,188.0 Z" fill="#b4b4b4" />
<rect x="1869" y="127" width="2.5" height="112" rx="1" fill="#2e2e2e" />
<rect x="1871.5" y="127" width="2" height="112" rx="1" fill="#555555" />
<path d="M1888,202 L1916,186 L1952,193 L1893,206.5 Z" fill="#0c0c0c" />
<path d="M1887.4,128.8 L1949.7,164.7 L1887.4,201.2 Z" fill="url(#playg)" />
<text x="1901.5" y="230" font-size="23.5" textLength="47.5" lengthAdjust="spacingAndGlyphs" fill="#0a0a0a" >Play</text><text x="1900" y="228" font-size="23.5" textLength="47.5" lengthAdjust="spacingAndGlyphs" fill="#d4d4d4"  stroke="#d4d4d4" stroke-width="0.45">Play</text>
<path d="M1993,179.5 L2009,179.5 L2001.0,188.0 Z" fill="#b4b4b4" />
<path d="M2097,169 L2111,184 L2097,199" fill="none" stroke="#e8e8e8" stroke-width="2.6" />
<path d="M2110,169 L2124,184 L2110,199" fill="none" stroke="#e8e8e8" stroke-width="2.6" />
<rect x="597" y="253" width="1539" height="907" fill="#1a1a1a" />
<rect x="597" y="253" width="1537.5" height="906" fill="#5a5a5a" />
<rect x="601" y="257.5" width="1529.3" height="898.8" fill="#d09c2a" />
<rect x="603.5" y="260" width="1524" height="893.5" fill="#3e6578" />
<g clip-path="url(#vpclip)"><rect x="604" y="261" width="1523" height="892" fill="url(#sky)" />
<line x1="1377.0" y1="777.75" x2="-2600" y2="1160" stroke="#c2c6b0" stroke-width="1" opacity="0.4"/>
<line x1="1380.9" y1="777.75" x2="-2470" y2="1160" stroke="#c2c6b0" stroke-width="1" opacity="0.4"/>
<line x1="1384.8" y1="777.75" x2="-2340" y2="1160" stroke="#c2c6b0" stroke-width="1" opacity="0.4"/>
<line x1="1388.7" y1="777.75" x2="-2210" y2="1160" stroke="#c2c6b0" stroke-width="1" opacity="0.4"/>
<line x1="1392.6" y1="777.75" x2="-2080" y2="1160" stroke="#c2c6b0" stroke-width="1" opacity="0.4"/>
<line x1="1396.5" y1="777.75" x2="-1950" y2="1160" stroke="#c2c6b0" stroke-width="1" opacity="0.4"/>
<line x1="1400.4" y1="777.75" x2="-1820" y2="1160" stroke="#c2c6b0" stroke-width="1" opacity="0.4"/>
<line x1="1404.3" y1="777.75" x2="-1690" y2="1160" stroke="#c2c6b0" stroke-width="1" opacity="0.4"/>
<line x1="1408.2" y1="777.75" x2="-1560" y2="1160" stroke="#c2c6b0" stroke-width="1" opacity="0.4"/>
<line x1="1412.1" y1="777.75" x2="-1430" y2="1160" stroke="#c2c6b0" stroke-width="1" opacity="0.4"/>
<line x1="1416.0" y1="777.75" x2="-1300" y2="1160" stroke="#c2c6b0" stroke-width="1" opacity="0.4"/>
<line x1="1419.9" y1="777.75" x2="-1170" y2="1160" stroke="#c2c6b0" stroke-width="1" opacity="0.4"/>
<line x1="1423.8" y1="777.75" x2="-1040" y2="1160" stroke="#c2c6b0" stroke-width="1" opacity="0.4"/>
<line x1="1427.7" y1="777.75" x2="-910" y2="1160" stroke="#c2c6b0" stroke-width="1" opacity="0.4"/>
<line x1="1431.6" y1="777.75" x2="-780" y2="1160" stroke="#c2c6b0" stroke-width="1" opacity="0.4"/>
<line x1="1435.5" y1="777.75" x2="-650" y2="1160" stroke="#c2c6b0" stroke-width="1" opacity="0.4"/>
<line x1="1439.4" y1="777.75" x2="-520" y2="1160" stroke="#c2c6b0" stroke-width="1" opacity="0.4"/>
<line x1="1443.3" y1="777.75" x2="-390" y2="1160" stroke="#c2c6b0" stroke-width="1" opacity="0.4"/>
<line x1="1447.2" y1="777.75" x2="-260" y2="1160" stroke="#c2c6b0" stroke-width="1" opacity="0.4"/>
<line x1="1451.1" y1="777.75" x2="-130" y2="1160" stroke="#c2c6b0" stroke-width="1" opacity="0.4"/>
<line x1="1455.0" y1="777.75" x2="0" y2="1160" stroke="#c2c6b0" stroke-width="1" opacity="0.4"/>
<line x1="1458.9" y1="777.75" x2="130" y2="1160" stroke="#c2c6b0" stroke-width="1" opacity="0.4"/>
<line x1="1462.8" y1="777.75" x2="260" y2="1160" stroke="#c2c6b0" stroke-width="1" opacity="0.4"/>
<line x1="1466.7" y1="777.75" x2="390" y2="1160" stroke="#c2c6b0" stroke-width="1" opacity="0.4"/>
<line x1="1470.6" y1="777.75" x2="520" y2="1160" stroke="#c2c6b0" stroke-width="1" opacity="0.4"/>
<line x1="1474.5" y1="777.75" x2="650" y2="1160" stroke="#c2c6b0" stroke-width="1" opacity="0.4"/>
<line x1="1478.4" y1="777.75" x2="780" y2="1160" stroke="#c2c6b0" stroke-width="1" opacity="0.4"/>
<line x1="1482.3" y1="777.75" x2="910" y2="1160" stroke="#c2c6b0" stroke-width="1" opacity="0.4"/>
<line x1="1486.2" y1="777.75" x2="1040" y2="1160" stroke="#c2c6b0" stroke-width="1" opacity="0.4"/>
<line x1="1490.1" y1="777.75" x2="1170" y2="1160" stroke="#c2c6b0" stroke-width="1" opacity="0.4"/>
<line x1="1494.0" y1="777.75" x2="1300" y2="1160" stroke="#c2c6b0" stroke-width="1" opacity="0.4"/>
<line x1="1497.9" y1="777.75" x2="1430" y2="1160" stroke="#c2c6b0" stroke-width="1" opacity="0.4"/>
<line x1="1501.8" y1="777.75" x2="1560" y2="1160" stroke="#c2c6b0" stroke-width="1" opacity="0.4"/>
<line x1="1505.7" y1="777.75" x2="1690" y2="1160" stroke="#c2c6b0" stroke-width="1" opacity="0.4"/>
<line x1="1509.6" y1="777.75" x2="1820" y2="1160" stroke="#c2c6b0" stroke-width="1" opacity="0.4"/>
<line x1="1513.5" y1="777.75" x2="1950" y2="1160" stroke="#c2c6b0" stroke-width="1" opacity="0.4"/>
<line x1="1517.4" y1="777.75" x2="2080" y2="1160" stroke="#c2c6b0" stroke-width="1" opacity="0.4"/>
<line x1="1521.3" y1="777.75" x2="2210" y2="1160" stroke="#c2c6b0" stroke-width="1" opacity="0.4"/>
<line x1="1525.2" y1="777.75" x2="2340" y2="1160" stroke="#c2c6b0" stroke-width="1" opacity="0.4"/>
<line x1="1529.1" y1="777.75" x2="2470" y2="1160" stroke="#c2c6b0" stroke-width="1" opacity="0.4"/>
<line x1="1533.0" y1="777.75" x2="2600" y2="1160" stroke="#c2c6b0" stroke-width="1" opacity="0.4"/>
<line x1="1536.9" y1="777.75" x2="2730" y2="1160" stroke="#c2c6b0" stroke-width="1" opacity="0.4"/>
<line x1="1540.8" y1="777.75" x2="2860" y2="1160" stroke="#c2c6b0" stroke-width="1" opacity="0.4"/>
<line x1="1544.7" y1="777.75" x2="2990" y2="1160" stroke="#c2c6b0" stroke-width="1" opacity="0.4"/>
<line x1="1548.6" y1="777.75" x2="3120" y2="1160" stroke="#c2c6b0" stroke-width="1" opacity="0.4"/>
<line x1="1552.5" y1="777.75" x2="3250" y2="1160" stroke="#c2c6b0" stroke-width="1" opacity="0.4"/>
<line x1="1556.4" y1="777.75" x2="3380" y2="1160" stroke="#c2c6b0" stroke-width="1" opacity="0.4"/>
<line x1="1560.3" y1="777.75" x2="3510" y2="1160" stroke="#c2c6b0" stroke-width="1" opacity="0.4"/>
<line x1="1564.2" y1="777.75" x2="3640" y2="1160" stroke="#c2c6b0" stroke-width="1" opacity="0.4"/>
<line x1="1568.1" y1="777.75" x2="3770" y2="1160" stroke="#c2c6b0" stroke-width="1" opacity="0.4"/>
<line x1="1572.0" y1="777.75" x2="3900" y2="1160" stroke="#c2c6b0" stroke-width="1" opacity="0.4"/>
<line x1="1575.9" y1="777.75" x2="4030" y2="1160" stroke="#c2c6b0" stroke-width="1" opacity="0.4"/>
<line x1="1579.8" y1="777.75" x2="4160" y2="1160" stroke="#c2c6b0" stroke-width="1" opacity="0.4"/>
<line x1="1583.7" y1="777.75" x2="4290" y2="1160" stroke="#c2c6b0" stroke-width="1" opacity="0.4"/>
<line x1="1587.6" y1="777.75" x2="4420" y2="1160" stroke="#c2c6b0" stroke-width="1" opacity="0.4"/>
<line x1="1591.5" y1="777.75" x2="4550" y2="1160" stroke="#c2c6b0" stroke-width="1" opacity="0.4"/>
<line x1="1595.4" y1="777.75" x2="4680" y2="1160" stroke="#c2c6b0" stroke-width="1" opacity="0.4"/>
<line x1="1599.3" y1="777.75" x2="4810" y2="1160" stroke="#c2c6b0" stroke-width="1" opacity="0.4"/>
<line x1="1603.2" y1="777.75" x2="4940" y2="1160" stroke="#c2c6b0" stroke-width="1" opacity="0.4"/>
<line x1="1607.1" y1="777.75" x2="5070" y2="1160" stroke="#c2c6b0" stroke-width="1" opacity="0.4"/>
<line x1="1611.0" y1="777.75" x2="5200" y2="1160" stroke="#c2c6b0" stroke-width="1" opacity="0.4"/>
<line x1="1614.9" y1="777.75" x2="5330" y2="1160" stroke="#c2c6b0" stroke-width="1" opacity="0.4"/>
<line x1="1618.8" y1="777.75" x2="5460" y2="1160" stroke="#c2c6b0" stroke-width="1" opacity="0.4"/>
<line x1="1622.7" y1="777.75" x2="5590" y2="1160" stroke="#c2c6b0" stroke-width="1" opacity="0.4"/>
<line x1="1626.6" y1="777.75" x2="5720" y2="1160" stroke="#c2c6b0" stroke-width="1" opacity="0.4"/>
<line x1="1630.5" y1="777.75" x2="5850" y2="1160" stroke="#c2c6b0" stroke-width="1" opacity="0.4"/>
<line x1="1634.4" y1="777.75" x2="5980" y2="1160" stroke="#c2c6b0" stroke-width="1" opacity="0.4"/>
<line x1="1638.3" y1="777.75" x2="6110" y2="1160" stroke="#c2c6b0" stroke-width="1" opacity="0.4"/>
<line x1="1642.2" y1="777.75" x2="6240" y2="1160" stroke="#c2c6b0" stroke-width="1" opacity="0.4"/>
<line x1="1646.1" y1="777.75" x2="6370" y2="1160" stroke="#c2c6b0" stroke-width="1" opacity="0.4"/>
<line x1="604" y1="773.4" x2="2127" y2="755.4" stroke="#c6cab4" stroke-width="1" opacity="0.3"/>
<line x1="604" y1="781.4361912474506" x2="2127" y2="763.4361912474506" stroke="#c6cab4" stroke-width="1" opacity="0.3"/>
<line x1="604" y1="793.2509719809387" x2="2127" y2="775.2509719809387" stroke="#c6cab4" stroke-width="1" opacity="0.3"/>
<line x1="604" y1="808.4666088965482" x2="2127" y2="790.4666088965482" stroke="#c6cab4" stroke-width="1" opacity="0.3"/>
<line x1="604" y1="826.8429259229958" x2="2127" y2="808.8429259229958" stroke="#c6cab4" stroke-width="1" opacity="0.3"/>
<line x1="604" y1="848.2066359597437" x2="2127" y2="830.2066359597437" stroke="#c6cab4" stroke-width="1" opacity="0.3"/>
<line x1="604" y1="872.4237062816807" x2="2127" y2="854.4237062816807" stroke="#c6cab4" stroke-width="1" opacity="0.3"/>
<line x1="604" y1="899.3857341122961" x2="2127" y2="881.3857341122961" stroke="#c6cab4" stroke-width="1" opacity="0.3"/>
<line x1="604" y1="929.0022641348229" x2="2127" y2="911.0022641348229" stroke="#c6cab4" stroke-width="1" opacity="0.3"/>
<line x1="604" y1="961.1960505647187" x2="2127" y2="943.1960505647187" stroke="#c6cab4" stroke-width="1" opacity="0.3"/>
<line x1="604" y1="995.8999402596927" x2="2127" y2="977.8999402596927" stroke="#c6cab4" stroke-width="1" opacity="0.3"/>
<line x1="604" y1="1033.054719310403" x2="2127" y2="1015.054719310403" stroke="#c6cab4" stroke-width="1" opacity="0.3"/>
<line x1="604" y1="1072.6075668574185" x2="2127" y2="1054.6075668574185" stroke="#c6cab4" stroke-width="1" opacity="0.3"/>
<line x1="604" y1="1114.5109097970585" x2="2127" y2="1096.5109097970585" stroke="#c6cab4" stroke-width="1" opacity="0.3"/>
<line x1="604" y1="1158.7215523382802" x2="2127" y2="1140.7215523382802" stroke="#c6cab4" stroke-width="1" opacity="0.3"/>
<rect x="604" y="261" width="1523" height="892" fill="url(#vigS)" mask="url(#maskS)"/>
<rect x="604" y="261" width="1523" height="892" fill="url(#vigG)" mask="url(#maskG)"/>
<line x1="798.5" y1="407" x2="1945.5" y2="472.5" stroke="#8e8e2c" stroke-width="1.7" />
<line x1="798.5" y1="407" x2="796.5" y2="1070.5" stroke="#8e8e2c" stroke-width="1.7" />
<line x1="1945.5" y1="472.5" x2="1946" y2="990" stroke="#8e8e2c" stroke-width="1.7" />
<line x1="796.5" y1="1070.5" x2="1946" y2="990" stroke="#8e8e2c" stroke-width="1.7" />
<line x1="798.5" y1="407" x2="1066" y2="589" stroke="#8e8e2c" stroke-width="1.7" />
<line x1="1945.5" y1="472.5" x2="1565" y2="602" stroke="#8e8e2c" stroke-width="1.7" />
<line x1="796.5" y1="1070.5" x2="1056" y2="862" stroke="#8e8e2c" stroke-width="1.7" />
<line x1="1946" y1="990" x2="1591" y2="850" stroke="#8e8e2c" stroke-width="1.7" />
<rect x="1149" y="642" width="326" height="300" fill="#060604" />
<path d="M1149,642 L1475,645 L1475,650 L1419,653 L1151,653 Z" fill="url(#ceilg)" />
<rect x="1185" y="674" width="132" height="124" fill="#1d1f23" />
<rect x="1300.5" y="674" width="2.5" height="124" fill="#131417" />
<rect x="1172" y="674" width="14" height="150" fill="#18181a" />
<path d="M1149,655 L1172,674 L1172,826 L1149,842 Z" fill="url(#lwallg)" />
<path d="M1153,822 L1172,820 L1172,836 L1149,841 L1149,826 Z" fill="#e8e0c8" />
<rect x="1317" y="674" width="41" height="110" fill="#2a2419" />
<path d="M1322,674 L1345,674 L1343,784 L1319,784 Z" fill="#33291b" />
<rect x="1318" y="758" width="13" height="26" fill="#76583a" opacity="0.85"/>
<rect x="1357" y="674" width="4.5" height="112" fill="#464030" />
<path d="M1356,674 L1419,674 L1419,652 L1475,646 L1475,932 L1471,931 L1471,869 L1356,787 Z" fill="url(#rwallg)" />
<rect x="1411" y="676" width="3" height="160" fill="#6a6048" opacity="0.6"/>
<rect x="1151" y="652.5" width="268" height="21.5" fill="#060606" />
<rect x="1225" y="729" width="38" height="70" fill="#0b0b0b" />
<rect x="1231" y="730" width="23" height="35" fill="#deddc6" />
<path d="M1238,730 L1248,730 L1243,735 Z" fill="#555" />
<rect x="1330" y="747" width="7" height="37" rx="2" fill="#f6eed8" />
<rect x="1351.5" y="731" width="5" height="55" rx="2" fill="#f8f0dc" />
<rect x="1345.5" y="742" width="6" height="42" fill="#8a7450" opacity="0.7"/>
<rect x="1330" y="716" width="2.6" height="24" fill="#e8dcb8" />
<circle cx="1331" cy="717.5" r="3.6" fill="#e8dcb8"/>
<rect x="1325.5" y="716.5" width="11.5" height="2.4" fill="#d8cca4" />
<rect x="1330" y="806" width="3" height="10" fill="#8a7a50" />
<rect x="1351" y="822" width="4" height="10" fill="#a89868" />
<path d="M1149,839 L1172,836 L1240,833 L1471,931 L1471,932 L1149,949 Z" fill="url(#floorg)" />
<path d="M1149,839 L1172,836 L1240,833 L1471,931 L1471,932 L1149,949 Z" fill="#000" filter="url(#mottle)"/>
<line x1="1190" y1="835" x2="1170" y2="948" stroke="#4a4430" stroke-width="1.2" opacity="0.7"/>
<line x1="1232" y1="834" x2="1232" y2="945" stroke="#4a4430" stroke-width="1.2" opacity="0.7"/>
<line x1="1270" y1="846" x2="1300" y2="942" stroke="#4a4430" stroke-width="1.2" opacity="0.7"/>
<line x1="1310" y1="863" x2="1365" y2="938" stroke="#4a4430" stroke-width="1.2" opacity="0.7"/>
<line x1="1350" y1="880" x2="1430" y2="935" stroke="#4a4430" stroke-width="1.2" opacity="0.7"/>
<line x1="1149" y1="860" x2="1300" y2="858" stroke="#4a4430" stroke-width="1.2" opacity="0.7"/>
<line x1="1149" y1="885" x2="1360" y2="884" stroke="#4a4430" stroke-width="1.2" opacity="0.7"/>
<line x1="1149" y1="915" x2="1430" y2="912" stroke="#4a4430" stroke-width="1.2" opacity="0.7"/>
<ellipse cx="1302" cy="738" rx="13" ry="12" fill="#e4e4e4"/>
<ellipse cx="1306" cy="743" rx="7" ry="8" fill="#70747c"/>
<path d="M1288,739 L1304,735 L1306,747 L1290,751 Z" fill="#5a5e66" />
<path d="M1272,755 C1276,747 1284,745 1288,749 L1284,773 L1276,769 Z" fill="#b4b8c0" />
<rect x="1294" y="755" width="20" height="16" fill="#4a4e58" />
<path d="M1284,773 L1296,769 L1302,783 L1290,788 Z" fill="#c8ccd4" />
<ellipse cx="1291" cy="762" rx="7.5" ry="10" fill="#f4f6fc"/>
<ellipse cx="1291" cy="762" rx="4" ry="6" fill="#a8c4f0"/>
<path d="M1067,955 L1149,949 L1474,932 L1565,930 L1565,944 L1067,969 Z" fill="#a89a7c" />
<path d="M1067,962 L1565,938 L1565,944 L1067,969 Z" fill="#9a8c6e" />
<path d="M1055.5,600 L1149,600 L1149,950 L1067,955 L1055.5,956 Z" fill="#f2ede0" />
<path d="M1475,640 L1591,640 L1591,930 L1475,932.5 Z" fill="#f1ecdf" />
<path d="M1066,585 L1565,596 L1565,602.5 L1860,612.5 L1860,650 L1475,645 L1149,641 L1062.5,639 L1062.5,594 L1066,594 Z" fill="#f3eee0" />
<path d="M1062.5,638 L1149,640.5 L1149,643 L1064,641 Z" fill="#15130e" />
<path d="M1149,640.5 L1475,644 L1475,646.5 L1149,643.5 Z" fill="#2a261c" />
<path d="M1475,644.5 L1620,646 L1620,648.5 L1475,647 Z" fill="#15130e" />
<path d="M1650,647.5 L1752,648.5 L1752,651 L1650,650 Z" fill="#1a1812" />
<path d="M1796,650 L1836,650.5 L1836,652.5 L1796,652 Z" fill="#1a1812" />
<rect x="856" y="425" width="12" height="122" fill="#2f7ae6" />
<path d="M862,378 L878,429 L846,429 Z" fill="#2a62d0" />
<path d="M862,386 L870,426 L854,426 Z" fill="#2f6fe0" opacity="0.6"/>
<rect x="832" y="497" width="7.5" height="56" fill="#5a9e0e" />
<path d="M838,497 L864,509 L864,516 L838,503 Z" fill="#2f7ae6" />
<path d="M866,510 L915,513 L915,519 L866,517 Z" fill="#2f7ae6" />
<rect x="911" y="513" width="6.5" height="48" fill="#d22a0e" />
<path d="M877,560 L1006,560.5 L1006,569 L877,570 Z" fill="#d22a0e" />
<path d="M892,556 L912,560 L912,566 L892,566 Z" fill="#b82008" />
<path d="M1005,553 L1054,566.5 L1005,580 Z" fill="#c8280c" />
<path d="M795,529 L860,552 L882,553 L882,558 L856,562 L795,541 Z" fill="#5a9e0e" />
<ellipse cx="774" cy="529" rx="24.5" ry="14.5" fill="#5a9e0e" transform="rotate(10 774 529)"/>
<line x1="874.0905906927106" y1="571.1434671118318" x2="882.5449451083371" y2="574.2295473789309" stroke="#c8a880" stroke-width="7.5" />
<line x1="874.0905906927106" y1="571.1434671118318" x2="882.5449451083371" y2="574.2295473789309" stroke="#f6eee0" stroke-width="5" />
<line x1="866.3265717561535" y1="579.600532703326" x2="870.1225148098457" y2="587.7608523253216" stroke="#c8a880" stroke-width="7.5" />
<line x1="866.3265717561535" y1="579.600532703326" x2="870.1225148098457" y2="587.7608523253216" stroke="#f6eee0" stroke-width="5" />
<line x1="854.8565328881682" y1="580.0905906927106" x2="851.7704526210691" y2="588.5449451083371" stroke="#c8a880" stroke-width="7.5" />
<line x1="854.8565328881682" y1="580.0905906927106" x2="851.7704526210691" y2="588.5449451083371" stroke="#f6eee0" stroke-width="5" />
<line x1="846.399467296674" y1="572.3265717561535" x2="838.2391476746784" y2="576.1225148098457" stroke="#c8a880" stroke-width="7.5" />
<line x1="846.399467296674" y1="572.3265717561535" x2="838.2391476746784" y2="576.1225148098457" stroke="#f6eee0" stroke-width="5" />
<line x1="845.9094093072894" y1="560.8565328881682" x2="837.4550548916629" y2="557.7704526210691" stroke="#c8a880" stroke-width="7.5" />
<line x1="845.9094093072894" y1="560.8565328881682" x2="837.4550548916629" y2="557.7704526210691" stroke="#f6eee0" stroke-width="5" />
<line x1="853.6734282438465" y1="552.399467296674" x2="849.8774851901543" y2="544.2391476746784" stroke="#c8a880" stroke-width="7.5" />
<line x1="853.6734282438465" y1="552.399467296674" x2="849.8774851901543" y2="544.2391476746784" stroke="#f6eee0" stroke-width="5" />
<line x1="865.1434671118318" y1="551.9094093072894" x2="868.2295473789309" y2="543.4550548916629" stroke="#c8a880" stroke-width="7.5" />
<line x1="865.1434671118318" y1="551.9094093072894" x2="868.2295473789309" y2="543.4550548916629" stroke="#f6eee0" stroke-width="5" />
<line x1="873.600532703326" y1="559.6734282438465" x2="881.7608523253216" y2="555.8774851901543" stroke="#c8a880" stroke-width="7.5" />
<line x1="873.600532703326" y1="559.6734282438465" x2="881.7608523253216" y2="555.8774851901543" stroke="#f6eee0" stroke-width="5" />
<circle cx="860" cy="566" r="15" fill="url(#bulb)"/>
<path d="M838,546 L860,552 L882,553 L882,558 L856,562 L838,556 Z" fill="#5a9e0e" />
<path d="M877,560 L900,560 L900,570 L877,570 Z" fill="#d22a0e" />
<rect x="856" y="520" width="12" height="27" fill="#2f7ae6" />
</g>
<path d="M598,254 L618,254 L598,274 Z" fill="#d8a830" opacity="0.9"/>
<rect x="610" y="267.5" width="40.5" height="48" rx="9" fill="url(#btn)" stroke="#1f3340" stroke-width="1.6" />
<path d="M622,287 L639,287 L630.5,296 Z" fill="#0a0a0a" />
<rect x="661" y="267.5" width="184.5" height="48" rx="9" fill="url(#btn)" stroke="#1f3340" stroke-width="1.6" />
<path d="M674,294 C676,286 684,284 690,280 C696,278 702,280 705,285 C704,292 696,296 690,299 C684,302 676,300 674,294 Z" fill="#3a6ef0" />
<path d="M685,285 C689,280 697,279 702,282 C700,286 694,288 690,290 Z" fill="#9ab8f8" />
<text x="712" y="298" font-size="21.5" font-weight="bold" textLength="121" lengthAdjust="spacingAndGlyphs" fill="#101010" >Perspective</text>
<rect x="856" y="267.5" width="89" height="48" rx="9" fill="url(#btn)" stroke="#1f3340" stroke-width="1.6" />
<path d="M868,281 L884,276 L900,281 L898,298 L884,306 L870,298 Z" fill="#2a50d0" />
<path d="M868,281 L884,276 L900,281 L884,286 Z" fill="#8ab0f8" />
<path d="M884,286 L900,281 L898,298 L884,306 Z" fill="#3a78f4" />
<text x="907" y="298" font-size="21.5" font-weight="bold" textLength="25.5" lengthAdjust="spacingAndGlyphs" fill="#101010" >Lit</text>
<rect x="955.5" y="267.5" width="83.5" height="48" rx="9" fill="url(#btn)" stroke="#1f3340" stroke-width="1.6" />
<text x="969.5" y="298" font-size="21.5" font-weight="bold" textLength="56.5" lengthAdjust="spacingAndGlyphs" fill="#101010" >Show</text>
<rect x="1339" y="267.5" width="139" height="48" rx="9" fill="url(#btn)" stroke="#1f3340" stroke-width="1.6" />
<path d="M1384.5,268.3 L1348,268.3 Q1339.8,268.3 1339.8,276.5 L1339.8,306.5 Q1339.8,314.7 1348,314.7 L1384.5,314.7 Z" fill="#c77609" />
<g transform="rotate(0 1362 291.5)" ><path d="M1370,290.0 L1373,290.0 L1373,286.0 L1379,291.5 L1373,297.0 L1373,293.0 L1370,293.0 Z" fill="#0a0a0a" />
</g>
<g transform="rotate(90 1362 291.5)" ><path d="M1370,290.0 L1373,290.0 L1373,286.0 L1379,291.5 L1373,297.0 L1373,293.0 L1370,293.0 Z" fill="#0a0a0a" />
</g>
<g transform="rotate(180 1362 291.5)" ><path d="M1370,290.0 L1373,290.0 L1373,286.0 L1379,291.5 L1373,297.0 L1373,293.0 L1370,293.0 Z" fill="#0a0a0a" />
</g>
<g transform="rotate(270 1362 291.5)" ><path d="M1370,290.0 L1373,290.0 L1373,286.0 L1379,291.5 L1373,297.0 L1373,293.0 L1370,293.0 Z" fill="#0a0a0a" />
</g>
<path d="M1354.5,287.75 L1362,284.0 L1369.5,287.75 L1369.5,295.25 L1362,299.0 L1354.5,295.25 Z" fill="url(#cubeb)" />
<path d="M1354.5,287.75 L1362,291.5 L1369.5,287.75 L1362,284.0 Z" fill="#7aa6f4" />
<path d="M1399,284 A13,13 0 1 0 1421,286" fill="none" stroke="#0a0a0a" stroke-width="3.2" />
<path d="M1415,280 L1425,281 L1422,290 Z" fill="#0a0a0a" />
<path d="M1401.5,288.25 L1409,284.5 L1416.5,288.25 L1416.5,295.75 L1409,299.5 L1401.5,295.75 Z" fill="url(#cubeb)" />
<path d="M1401.5,288.25 L1409,292 L1416.5,288.25 L1409,284.5 Z" fill="#7aa6f4" />
<line x1="1444" y1="304" x2="1468" y2="280" stroke="#0a0a0a" stroke-width="3.2" />
<path d="M1460,277 L1472,277 L1472,289 Z" fill="#0a0a0a" />
<path d="M1440,295 L1440,307 L1452,307 Z" fill="#0a0a0a" />
<path d="M1449,288.5 L1456,285 L1463,288.5 L1463,295.5 L1456,299 L1449,295.5 Z" fill="url(#cubeb)" />
<path d="M1449,288.5 L1456,292 L1463,288.5 L1456,285 Z" fill="#7aa6f4" />
<rect x="1487" y="267.5" width="44" height="48" rx="9" fill="url(#btn)" stroke="#1f3340" stroke-width="1.6" />
<circle cx="1509" cy="291.7" r="14" fill="none" stroke="#0a0a0a" stroke-width="2.4"/>
<path d="M1500,282.7 C1504,278.7 1510,278.7 1512,281.7 C1510,283.7 1508,285.7 1508,288.7 C1506,289.7 1504,287.7 1502,288.7 C1499,287.7 1498,284.7 1500,282.7 Z" fill="#0a0a0a" />
<path d="M1506,291.7 C1510,290.7 1514,293.7 1513,296.7 C1512,300.7 1510,303.7 1508,303.7 C1507,299.7 1505,296.7 1506,291.7 Z" fill="#0a0a0a" />
<path d="M1515,280.7 C1519,282.7 1522,286.7 1522,290.7 C1519,290.7 1517,287.7 1515,285.7 Z" fill="#0a0a0a" />
<path d="M1496,292.7 C1499,293.7 1501,296.7 1500,300.7 C1497,298.7 1496,295.7 1496,292.7 Z" fill="#0a0a0a" />
<rect x="1540" y="267.5" width="158" height="48" rx="9" fill="url(#btn)" stroke="#1f3340" stroke-width="1.6" />
<rect x="1586" y="268.3" width="49.5" height="46.4" fill="#c77609" />
<line x1="1586" y1="267.5" x2="1586" y2="315.5" stroke="#1f3340" stroke-width="1.4" />
<line x1="1635.5" y1="267.5" x2="1635.5" y2="315.5" stroke="#1f3340" stroke-width="1.4" />
<path d="M1552,291 C1558,289 1566,292 1572,298" fill="none" stroke="#0a0a0a" stroke-width="2.2" />
<line x1="1556" y1="290" x2="1556" y2="278" stroke="#8a9298" stroke-width="1.8" />
<path d="M1552.5,280 L1556,274 L1559.5,280 Z" fill="#8a9298" />
<line x1="1563" y1="291" x2="1566" y2="278" stroke="#8a9298" stroke-width="1.8" />
<path d="M1562.5,279 L1567,273.5 L1569.5,280.5 Z" fill="#8a9298" />
<line x1="1570" y1="296" x2="1578" y2="286" stroke="#0a0a0a" stroke-width="2" />
<path d="M1573,284.5 L1581,283 L1579.5,290.5 Z" fill="#0a0a0a" />
<path d="M1558,303.5 L1566,303.5 L1562,307.5 Z" fill="#111" />
<rect x="1598" y="280.5" width="24.5" height="24.5" fill="none" stroke="#0a0a0a" stroke-width="2" />
<line x1="1604.1" y1="280.5" x2="1604.1" y2="305" stroke="#0a0a0a" stroke-width="1.6" />
<line x1="1598" y1="286.6" x2="1622.5" y2="286.6" stroke="#0a0a0a" stroke-width="1.6" />
<line x1="1610.2" y1="280.5" x2="1610.2" y2="305" stroke="#0a0a0a" stroke-width="1.6" />
<line x1="1598" y1="292.7" x2="1622.5" y2="292.7" stroke="#0a0a0a" stroke-width="1.6" />
<line x1="1616.3" y1="280.5" x2="1616.3" y2="305" stroke="#0a0a0a" stroke-width="1.6" />
<line x1="1598" y1="298.8" x2="1622.5" y2="298.8" stroke="#0a0a0a" stroke-width="1.6" />
<text x="1656" y="294.5" font-size="21.5" textLength="25.5" lengthAdjust="spacingAndGlyphs" fill="#0a0a0a" stroke="#0a0a0a" stroke-width="0.9">10</text>
<path d="M1664,302.5 L1672,302.5 L1668,306.5 Z" fill="#111" />
<rect x="1706.5" y="267.5" width="118.5" height="48" rx="9" fill="url(#btn)" stroke="#1f3340" stroke-width="1.6" />
<path d="M1753,268.3 L1715.5,268.3 Q1707.3,268.3 1707.3,276.5 L1707.3,306.5 Q1707.3,314.7 1715.5,314.7 L1753,314.7 Z" fill="#c77609" />
<line x1="1753" y1="267.5" x2="1753" y2="315.5" stroke="#1f3340" stroke-width="1.4" />
<path d="M1717,303 L1729,279 L1741,303 Z" fill="none" stroke="#0a0a0a" stroke-width="2.2" />
<path d="M1730,283 C1736,286 1739,292 1739,298" fill="none" stroke="#0a0a0a" stroke-width="1.6" />
<path d="M1728,281 L1734,283 L1730,287 Z" fill="#0a0a0a" />
<path d="M1736,296 L1742,297 L1738.5,302 Z" fill="#0a0a0a" />
<text x="1775" y="294.5" font-size="21.5" textLength="33" lengthAdjust="spacingAndGlyphs" fill="#0a0a0a" stroke="#0a0a0a" stroke-width="0.9">10°</text>
<path d="M1786,302.5 L1794,302.5 L1790,306.5 Z" fill="#111" />
<rect x="1839.5" y="267.5" width="131" height="48" rx="9" fill="url(#btn)" stroke="#1f3340" stroke-width="1.6" />
<path d="M1886.5,268.3 L1848.5,268.3 Q1840.3,268.3 1840.3,276.5 L1840.3,306.5 Q1840.3,314.7 1848.5,314.7 L1886.5,314.7 Z" fill="#c77609" />
<line x1="1886.5" y1="267.5" x2="1886.5" y2="315.5" stroke="#1f3340" stroke-width="1.4" />
<line x1="1854" y1="300" x2="1870" y2="284" stroke="#0a0a0a" stroke-width="3.4" />
<path d="M1862,281 L1874,280 L1873,292 Z" fill="#0a0a0a" />
<rect x="1850.5" y="297" width="6.5" height="6.5" fill="#0a0a0a" />
<text x="1905.5" y="294.5" font-size="21.5" textLength="49" lengthAdjust="spacingAndGlyphs" fill="#0a0a0a" stroke="#0a0a0a" stroke-width="0.9">0.25</text>
<path d="M1925,302.5 L1933,302.5 L1929,306.5 Z" fill="#111" />
<rect x="1979.5" y="267.5" width="93.5" height="48" rx="9" fill="url(#btn)" stroke="#1f3340" stroke-width="1.6" />
<rect x="2009" y="288" width="16" height="14" rx="1.5" fill="#0a0a0a" />
<circle cx="2012" cy="285" r="4.6" fill="#0a0a0a"/><circle cx="2021" cy="285" r="4.6" fill="#0a0a0a"/>
<circle cx="2012" cy="285" r="1.6" fill="#b9c1c9"/><circle cx="2021" cy="285" r="1.6" fill="#b9c1c9"/>
<path d="M2025,293 L2031,289 L2031,301 L2025,297 Z" fill="#0a0a0a" />
<line x1="1996" y1="288.5" x2="2008" y2="288.5" stroke="#0a0a0a" stroke-width="1.8" />
<line x1="1999" y1="292.5" x2="2008" y2="292.5" stroke="#0a0a0a" stroke-width="1.8" />
<line x1="1997" y1="296.5" x2="2008" y2="296.5" stroke="#0a0a0a" stroke-width="1.8" />
<line x1="2000" y1="300.5" x2="2008" y2="300.5" stroke="#0a0a0a" stroke-width="1.8" />
<text x="2043" y="294.5" font-size="21.5" textLength="14" lengthAdjust="spacingAndGlyphs" fill="#0a0a0a" stroke="#0a0a0a" stroke-width="0.9">4</text>
<path d="M2046,302.5 L2054,302.5 L2050,306.5 Z" fill="#111" />
<rect x="2099" y="282.5" width="16" height="14" fill="none" stroke="#f4f4f4" stroke-width="3" />
<rect x="2094.5" y="288.5" width="15" height="13" fill="#3c6276" stroke="#f4f4f4" stroke-width="3.4" />
<line x1="659" y1="1051" x2="659" y2="1097" stroke="#2a3cf0" stroke-width="2.2" />
<line x1="659" y1="1096.6" x2="707" y2="1096.6" stroke="#f01808" stroke-width="2.2" />
<line x1="659" y1="1096.6" x2="666" y2="1096.6" stroke="#20d020" stroke-width="2.2" />
<text x="665.5" y="1058" font-size="21" font-weight="bold" textLength="13" lengthAdjust="spacingAndGlyphs" fill="#2a4cf0" >Z</text>
<text x="671" y="1105" font-size="21" font-weight="bold" textLength="14" lengthAdjust="spacingAndGlyphs" fill="#28e028" >Y</text>
<text x="713" y="1105" font-size="21" font-weight="bold" textLength="13.5" lengthAdjust="spacingAndGlyphs" fill="#f02818" >X</text>
<circle cx="640.6" cy="1116" r="11" fill="#9c9e98" stroke="#c4cac4" stroke-width="2"/>
<text x="640.6" y="1123" font-size="19" font-weight="bold" text-anchor="middle" fill="#b8bcb4" >?</text>
<text x="1777.2" y="1137.6" font-size="23.5" textLength="59.5" lengthAdjust="spacingAndGlyphs" fill="#1c1c1c" >Level:</text><text x="1776" y="1136" font-size="23.5" textLength="59.5" lengthAdjust="spacingAndGlyphs" fill="#585a5a"  stroke="#585a5a" stroke-width="0.45">Level:</text>
<text x="1852.5" y="1138" font-size="23.5" textLength="259.5" lengthAdjust="spacingAndGlyphs" fill="#3a5a66" >LightingTest (Persistent)</text><text x="1851" y="1136" font-size="23.5" textLength="259.5" lengthAdjust="spacingAndGlyphs" fill="#84d4dc"  stroke="#84d4dc" stroke-width="0.45">LightingTest (Persistent)</text>
<rect x="5" y="115.7" width="289" height="54" fill="none" stroke="#ff2400" stroke-width="6" />
<rect x="13" y="432.7" width="219" height="58" fill="none" stroke="#ff2400" stroke-width="6" />
<rect x="247.7" y="334.2" width="331.6" height="68.8" fill="none" stroke="#ff2400" stroke-width="6" />
<line x1="580" y1="403" x2="812" y2="563" stroke="#ff2400" stroke-width="6" />
<path d="M831,577 L799.5,572 L815,549 Z" fill="#ff2400" />
<clipPath id="oneclip"><path d="M280,10 L302.6,10 L302.6,50 L295.6,50 L295.6,42 L280,42 Z"/></clipPath><g clip-path="url(#oneclip)"><text x="288" y="46" font-size="38" font-weight="bold" fill="#ff2400" >1</text>
</g>
<text x="231" y="364" font-size="34" font-weight="bold" fill="#ff2400" >2</text>
<text x="578.5" y="272.5" font-size="38" font-weight="bold" fill="#ff2400" >3</text>
</svg>
</body></html>
